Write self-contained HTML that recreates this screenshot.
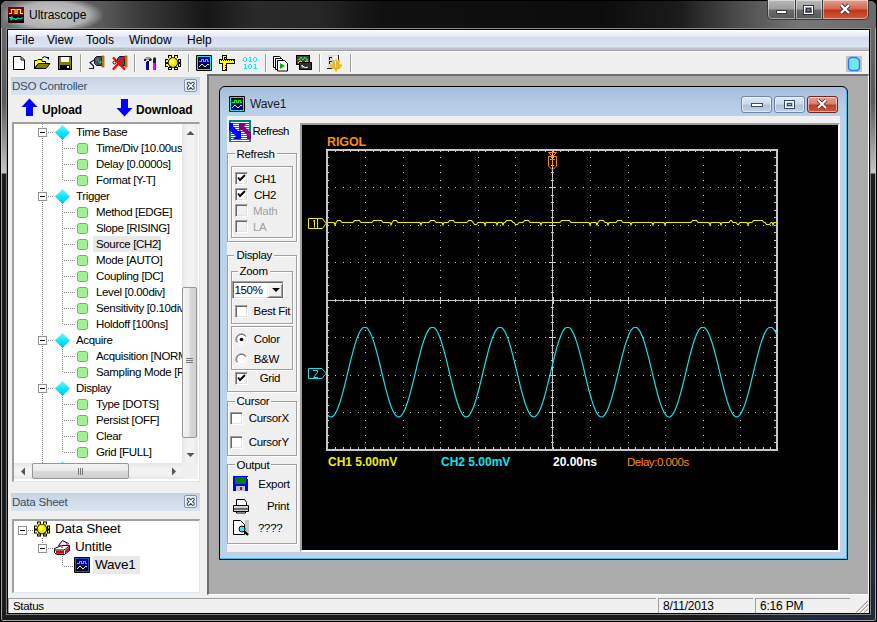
<!DOCTYPE html>
<html><head><meta charset="utf-8">
<style>
*{margin:0;padding:0;box-sizing:border-box}
html,body{width:877px;height:622px;overflow:hidden;background:#000;font-family:"Liberation Sans",sans-serif;font-size:11px;color:#000}
.a{position:absolute}
svg{position:absolute;overflow:visible}
/* frame */
#frame{left:0;top:0;width:877px;height:622px;border-radius:7px 7px 3px 3px;background:linear-gradient(#6c6c6c 0,#626262 60px,#585858 100px,#c6c6c6 172px,#1c1c1c 173px,#1c1c1c 100%);border:1px solid #000;overflow:hidden}
#frame .hl{position:absolute;left:0;top:0;right:0;bottom:0;border:1px solid rgba(200,200,200,.75);border-radius:6px 6px 2px 2px}
#title{left:1px;top:1px;width:875px;height:27px;border-radius:6px 6px 0 0;background:linear-gradient(90deg,#707070 0,#5a5a5a 100px,#3a3a3a 140px,#161616 205px,#2a2a2a 255px,#262626 320px,#101010 380px,#0c0c0c 600px,#1c1c1c 680px,#4e4e4e 740px,#767676 800px,#6a6a6a 877px)}
#glow{left:0;top:1px;width:120px;height:27px;background:radial-gradient(ellipse 52px 18px at 52px 14px,rgba(205,205,205,.95) 0,rgba(185,185,185,.9) 70%,rgba(120,120,120,0) 100%)}
#ttext{left:29px;top:8px;font-size:12px;color:#000}
/* client */
#client{left:7px;top:29px;width:863px;height:585px;background:#f0f0f0;border:1px solid #000;box-shadow:0 0 0 1px rgba(150,150,150,.8)}
#menubar{left:8px;top:30px;width:861px;height:19px;background:linear-gradient(#fff 0,#f4f6fb 2px,#e8ecf7 6px,#d6dcef 7px,#dde4f4 17px,#bcc0d0 18px)}
.mi{position:absolute;top:3px;font-size:12px;color:#000}
#toolbar{left:8px;top:49px;width:861px;height:545px;background:linear-gradient(#c2c2c2 0,#c2c2c2 1px,#a0a0a0 1px,#a0a0a0 2px,#fff 2px,#fff 3px,#f0f0f0 3px)}
/* panels */
.ptitle{position:absolute;height:18px;background:linear-gradient(#c6d3e2,#dbe5f0);color:#3c4e63;font-size:11.6px;letter-spacing:-0.25px;padding:2px 0 0 1px}
.pclose{position:absolute;width:13px;height:13px;border:1px solid #8494ac;border-radius:2px;background:#d6e2ef;box-shadow:inset 0 0 0 1px #e8f0f8}
.tree{position:absolute;background:#fff;border-top:2px solid #a0a0a0;border-left:2px solid #a0a0a0;border-right:1px solid #dce7f3;border-bottom:1px solid #dce7f3}
.ti{position:absolute;font-size:12px;white-space:nowrap;line-height:14px}
/* mdi */
#mdi{left:207px;top:74px;width:662px;height:521px;background:#ababab;border-top:2px solid #6e6e6e;border-left:2px solid #6e6e6e;border-right:1px solid #fff;border-bottom:1px solid #fff}
#wave{left:219px;top:86px;width:629px;height:474px;border:1px solid #000;border-radius:6px 6px 0 0;background:linear-gradient(#a5bedb 0,#b4cae4 15px,#bcd1ea 30px,#bcd1ea 100%);box-shadow:inset -1px -1px 0 #29c8f0}
#wclient{left:227px;top:116px;width:613px;height:436px;background:#f0f0f0}
#scope{left:300px;top:123px;width:540px;height:429px;background:#000;border-top:2px solid #a0a0a0;border-left:2px solid #a0a0a0;border-right:2px solid #fff;border-bottom:2px solid #fff}
.gb{position:absolute;border:1px solid #a0a0a0;box-shadow:inset 1px 1px 0 #fff,1px 1px 0 #fff}
.gl{position:absolute;background:#f0f0f0;font-size:12px;padding:0 2px;line-height:13px}
.lbl{position:absolute;font-size:12px;line-height:13px;white-space:nowrap}
.cb{position:absolute;width:13px;height:13px;border:1px solid #8e8f8f;background:linear-gradient(135deg,#dcdcdc,#fff)}
/* status */
#status{left:8px;top:598px;width:861px;height:16px}
.sp{position:absolute;top:0;height:15px;border-top:1px solid #a0a0a0;border-left:1px solid #a0a0a0;font-size:12px;padding:1px 0 0 4px;line-height:13px;letter-spacing:-0.2px}
</style></head>
<body>
<div id="frame" class="a"><div class="a" style="left:640px;top:560px;width:236px;height:62px;background:radial-gradient(ellipse 120px 30px at 180px 62px,rgba(40,90,150,.3),rgba(40,90,150,0))"></div><div class="a" style="left:820px;top:420px;width:56px;height:200px;background:radial-gradient(ellipse 20px 80px at 56px 150px,rgba(40,90,150,.3),rgba(40,90,150,0))"></div><div class="hl"></div></div>
<div id="title" class="a"></div>
<div id="glow" class="a"></div>
<div id="ttext" class="a">Ultrascope</div>

<div id="client" class="a"></div>
<div id="menubar" class="a">
  <span class="mi" style="left:7px">File</span>
  <span class="mi" style="left:39px">View</span>
  <span class="mi" style="left:78px">Tools</span>
  <span class="mi" style="left:121px">Window</span>
  <span class="mi" style="left:179px">Help</span>
</div>
<div id="toolbar" class="a"></div>
<div class="ptitle" style="left:11px;top:493px;width:189px">Data Sheet</div>
<div class="pclose" style="left:184px;top:495px"></div>
<div class="tree" style="left:12px;top:519px;width:188px;height:74px"></div>
<!--TB--><svg style="left:0;top:0" width="877" height="80"><path d="M13.5 56.5H21L24.5 60V69.5H13.5Z" fill="#fff" stroke="#000"/><path d="M21 57V60H24" fill="none" stroke="#000"/><path d="M34.5 60.5H37L38 59.5H42V61.5H45.5V63.5H38.5L34.5 68.5Z" fill="#ffff00" stroke="#000"/><path d="M34.5 68.5L38.5 63.5H50L46 68.5Z" fill="#808000" stroke="#000"/><path d="M42 58Q44 55.5 47 57.5" fill="none" stroke="#000"/><path d="M46 57h3v3z" fill="#000"/><rect x="58.5" y="56.5" width="13" height="13" fill="#808000" stroke="#000"/><rect x="61" y="57" width="8" height="5" fill="#fff"/><rect x="60" y="65" width="10" height="4" fill="#000"/><rect x="67" y="66" width="2" height="2" fill="#fff"/><rect x="80" y="54" width="1" height="18" fill="#a0a0a0"/><rect x="81" y="54" width="1" height="18" fill="#fff"/><path d="M94.5 58.5L96.5 56.5H101.5V65.5H96.5L94.5 63.5Z" fill="#4a5060" stroke="#101828"/><path d="M97 58L100 64M96 61L99 59" stroke="#7a8a60" stroke-width=".8"/><rect x="100" y="61" width="1.5" height="2" fill="#20e080"/><rect x="102" y="56" width="2" height="11" fill="#e09020" stroke="#604000" stroke-width=".6"/><path d="M95 59.5L90 62.5L93.5 66V68.5H89" fill="none" stroke="#101838" stroke-width="1.2"/><path d="M117.5 58.5L119.5 56.5H124.5V65.5H119.5L117.5 63.5Z" fill="#4a5060" stroke="#101828"/><rect x="125" y="56" width="2" height="11" fill="#e09020" stroke="#604000" stroke-width=".6"/><circle cx="114.5" cy="62.5" r="1.5" fill="#fff" stroke="#000"/><path d="M113 57.5L125 69.5M124.5 57L113 69.5" stroke="#ff0000" stroke-width="2.4"/><rect x="134" y="54" width="1" height="18" fill="#a0a0a0"/><rect x="135" y="54" width="1" height="18" fill="#fff"/><path d="M144 59.5L146 57.5H150L152 59.5L151 61H149V59.5H146V61H144Z" fill="#202020"/><rect x="145" y="58" width="5" height="1" fill="#b0b0b0"/><rect x="146" y="61" width="3" height="9" fill="#0000ff"/><rect x="148" y="61" width="1" height="9" fill="#000"/><rect x="146" y="61" width="1" height="1" fill="#40e0e0"/><path d="M154 57L156 58V63H153V59Z" fill="#202020"/><rect x="153" y="63" width="3" height="7" fill="#ff00ff"/><rect x="155" y="63" width="1" height="7" fill="#a00020"/><rect x="155" y="63" width="1" height="1" fill="#ff0000"/><g fill="#000"><path d="M168 55h4v3h-4zM174 55h4v3h-4zM165 59h3v4h-3zM178 59h3v4h-3zM165 63h3v4h-3zM178 63h3v4h-3zM168 67h4v3h-4zM174 67h4v3h-4z"/></g><g fill="#ffff00"><path d="M169 56h2v2h-2zM175 56h2v2h-2zM166 60h2v2h-2zM179 60h1v2h-1zM166 64h2v2h-2zM179 64h1v2h-1zM169 68h2v1h-2zM175 68h2v1h-2z"/></g><circle cx="173" cy="62.5" r="5.2" fill="#000"/><circle cx="173" cy="62.5" r="4.4" fill="#e8e800"/><circle cx="172" cy="61.5" r="2.6" fill="#ffff40"/><rect x="188" y="54" width="1" height="18" fill="#a0a0a0"/><rect x="189" y="54" width="1" height="18" fill="#fff"/><rect x="196" y="55" width="16" height="16" rx="1" fill="#000"/><rect x="197" y="56" width="14" height="14" fill="#00f0f0"/><rect x="198" y="57" width="12" height="12" fill="#000"/><rect x="199" y="58" width="10" height="10" fill="#000090"/><rect x="199" y="61" width="2" height="1" fill="#00ff00"/><rect x="201" y="59" width="1" height="3" fill="#00ff00"/><rect x="201" y="59" width="3" height="1" fill="#00ff00"/><rect x="203" y="59" width="1" height="3" fill="#00ff00"/><rect x="203" y="61" width="2" height="1" fill="#00ff00"/><rect x="205" y="59" width="1" height="3" fill="#00ff00"/><rect x="205" y="59" width="3" height="1" fill="#00ff00"/><rect x="207" y="59" width="1" height="3" fill="#00ff00"/><rect x="207" y="61" width="2" height="1" fill="#00ff00"/><rect x="199" y="66" width="1" height="1" fill="#ffff00"/><rect x="200" y="65" width="1" height="1" fill="#ffff00"/><rect x="201" y="64" width="2" height="1" fill="#ffff00"/><rect x="203" y="65" width="1" height="1" fill="#ffff00"/><rect x="204" y="66" width="2" height="1" fill="#ffff00"/><rect x="206" y="65" width="1" height="1" fill="#ffff00"/><rect x="207" y="64" width="2" height="1" fill="#ffff00"/><rect x="222" y="55" width="5" height="16" fill="#000"/><rect x="219" y="59" width="16" height="5" fill="#000"/><rect x="223" y="56" width="3" height="14" fill="#ffff00"/><rect x="220" y="60" width="14" height="3" fill="#ffff00"/><g fill="#000"><rect x="224" y="57" width="2" height="1"/><rect x="224" y="58" width="1" height="1"/><rect x="224" y="59" width="2" height="1"/><rect x="221" y="60" width="1" height="1"/><rect x="223" y="60" width="1" height="1"/><rect x="225" y="60" width="1" height="1"/><rect x="227" y="60" width="1" height="1"/><rect x="229" y="60" width="1" height="1"/><rect x="231" y="60" width="1" height="1"/><rect x="233" y="60" width="1" height="1"/><rect x="225" y="65" width="1" height="1"/><rect x="225" y="67" width="1" height="1"/><rect x="225" y="69" width="1" height="1"/></g><g fill="#00f0ff"><path d="M244 57h2v1h-2zM243 58h1v3h-1zM246 58h1v3h-1zM244 61h2v1h-2z"/><path d="M249 57h2v5h-1v-4h-1zM249 61h3v1h-3z"/><path d="M254 57h2v1h-2zM253 58h1v3h-1zM256 58h1v3h-1zM254 61h2v1h-2z"/><path d="M244 64h2v5h-1v-4h-1zM244 68h3v1h-3z"/><path d="M249 64h2v1h-2zM248 65h1v3h-1zM251 65h1v3h-1zM249 68h2v1h-2z"/><path d="M254 64h2v5h-1v-4h-1zM254 68h3v1h-3z"/></g><rect x="265" y="54" width="1" height="18" fill="#a0a0a0"/><rect x="266" y="54" width="1" height="18" fill="#fff"/><path d="M273.5 56.5h6l2 2v9h-8z" fill="#fff" stroke="#000"/><path d="M275.5 58.5h6l2 2v9h-8z" fill="#fff" stroke="#000"/><path d="M277.5 60.5h7l3 3v7.5h-10z" fill="#fff" stroke="#000"/><path d="M280 63v6l5-3z" fill="#00b000"/><rect x="296.5" y="55.5" width="13" height="9" fill="#404040" stroke="#000"/><path d="M298 59.5h2v-2h2v2h2v-2h2v2h2" fill="none" stroke="#00ff00"/><path d="M298 63l2-2h1l2 2h1l2-2h2" fill="none" stroke="#ffff00"/><rect x="299.5" y="62.5" width="12" height="7" fill="#303030" stroke="#000"/><path d="M302 65v2h2M302 65l2 2q2 1.5 4 0" fill="none" stroke="#fff"/><rect x="319" y="54" width="1" height="18" fill="#a0a0a0"/><rect x="320" y="54" width="1" height="18" fill="#fff"/><rect x="328" y="55" width="11" height="14" fill="#d8d8d8"/><rect x="333" y="56" width="5" height="10" fill="#f0f0f0"/><rect x="338" y="55" width="1" height="14" fill="#303030"/><g fill="#202020"><rect x="329" y="57" width="3" height="1"/><rect x="329" y="58" width="1" height="2"/><rect x="329" y="61" width="3" height="1"/><rect x="329" y="62" width="1" height="2"/><rect x="327" y="68" width="5" height="1"/></g><g fill="#f8b800"><circle cx="336" cy="65.5" r="4"/><path d="M335 59.5h2v12h-2zM330 64.5h12v2h-12zM331.5 61l1.5-1.5 8 8-1.5 1.5zM340.5 61l-1.5-1.5-8 8 1.5 1.5z"/></g><rect x="334" y="61" width="4" height="6" fill="#c8c050"/><rect x="335" y="61" width="1" height="6" fill="#f0f0a0"/><rect x="350" y="54" width="1" height="18" fill="#a0a0a0"/><rect x="351" y="54" width="1" height="18" fill="#fff"/><rect x="846" y="56" width="16" height="16" fill="#c4c4c4"/><path d="M849.5 58.5L850.5 57.5H856.5L859.5 60.5V68.5L857.5 70.5H850.5L848.5 68.5V59.5Z" fill="#72e6f0" stroke="#1a7cff" stroke-width="1.3"/></svg><!--/TB--><!-- data sheet tree -->
<svg style="left:0;top:0" width="210" height="600"><g fill="#808080">

<rect x="28" y="530" width="1" height="1"/><rect x="30" y="530" width="1" height="1"/><rect x="32" y="530" width="1" height="1"/>
<rect x="42" y="538" width="1" height="1"/><rect x="42" y="540" width="1" height="1"/><rect x="42" y="542" width="1" height="1"/>
<rect x="48" y="548" width="1" height="1"/><rect x="50" y="548" width="1" height="1"/><rect x="52" y="548" width="1" height="1"/>
<rect x="62" y="556" width="1" height="1"/><rect x="62" y="558" width="1" height="1"/><rect x="62" y="560" width="1" height="1"/><rect x="62" y="562" width="1" height="1"/><rect x="62" y="564" width="1" height="1"/>
<rect x="64" y="566" width="1" height="1"/><rect x="66" y="566" width="1" height="1"/><rect x="68" y="566" width="1" height="1"/><rect x="70" y="566" width="1" height="1"/><rect x="72" y="566" width="1" height="1"/>
</g>
<rect x="18.5" y="526.5" width="8" height="8" fill="#fff" stroke="#919191"/><rect x="20" y="530" width="5" height="1" fill="#000"/>
<rect x="38.5" y="544.5" width="8" height="8" fill="#fff" stroke="#919191"/><rect x="40" y="548" width="5" height="1" fill="#000"/>
<g transform="translate(-131,466.5)"><g fill="#000"><path d="M168 55h4v3h-4zM174 55h4v3h-4zM165 59h3v4h-3zM178 59h3v4h-3zM165 63h3v4h-3zM178 63h3v4h-3zM168 67h4v3h-4zM174 67h4v3h-4z"/></g><g fill="#ffff00"><path d="M169 56h2v2h-2zM175 56h2v2h-2zM166 60h2v2h-2zM179 60h1v2h-1zM166 64h2v2h-2zM179 64h1v2h-1zM169 68h2v1h-2zM175 68h2v1h-2z"/></g><circle cx="173" cy="62.5" r="5.2" fill="#000"/><circle cx="173" cy="62.5" r="4.4" fill="#e8e800"/><circle cx="172" cy="61.5" r="2.6" fill="#ffff40"/></g>
<path d="M58.5 545.5L62.5 540.5L68.5 543.5L64.5 548.5Z" fill="#e8e8e8" stroke="#000"/><path d="M54.5 548.5L61.5 545.5H69.5V550.5L64.5 554.5H56.5L54.5 552.5Z" fill="#fff" stroke="#000"/><path d="M55 550h9l5-3.5" fill="none" stroke="#000"/><path d="M56 551.5h8M56 553h8" stroke="#e00000" stroke-width="1.3"/><path d="M65 550.5l4-3v3l-4 3.5z" fill="#d00030"/><rect x="61" y="546" width="2" height="2" fill="#ff40c0"/><rect x="66" y="543" width="2" height="2" fill="#ff40c0"/>
<rect x="74" y="557" width="16" height="16" rx="1" fill="#000"/><rect x="75" y="558" width="14" height="14" fill="#1a5ac8"/><rect x="76" y="559" width="12" height="12" fill="#000"/><rect x="77" y="560" width="10" height="10" fill="#000090"/><rect x="77" y="563" width="2" height="1" fill="#00ff00"/><rect x="79" y="561" width="1" height="3" fill="#00ff00"/><rect x="79" y="561" width="3" height="1" fill="#00ff00"/><rect x="81" y="561" width="1" height="3" fill="#00ff00"/><rect x="81" y="563" width="2" height="1" fill="#00ff00"/><rect x="83" y="561" width="1" height="3" fill="#00ff00"/><rect x="83" y="561" width="3" height="1" fill="#00ff00"/><rect x="85" y="561" width="1" height="3" fill="#00ff00"/><rect x="85" y="563" width="2" height="1" fill="#00ff00"/><rect x="77" y="568" width="1" height="1" fill="#ffff00"/><rect x="78" y="567" width="1" height="1" fill="#ffff00"/><rect x="79" y="566" width="2" height="1" fill="#ffff00"/><rect x="81" y="567" width="1" height="1" fill="#ffff00"/><rect x="82" y="568" width="2" height="1" fill="#ffff00"/><rect x="84" y="567" width="1" height="1" fill="#ffff00"/><rect x="85" y="566" width="2" height="1" fill="#ffff00"/>
</svg>
<div class="a" style="left:93px;top:556px;width:47px;height:18px;background:#e9e9e9"></div>
<div class="a" style="left:55px;top:521px;font-size:13.5px;line-height:16px;letter-spacing:-0.2px">Data Sheet</div>
<div class="a" style="left:75px;top:539px;font-size:13.5px;line-height:16px;letter-spacing:-0.2px">Untitle</div>
<div class="a" style="left:95px;top:557px;font-size:13.5px;line-height:16px;letter-spacing:-0.2px">Wave1</div>


<!-- DSO controller panel -->
<div class="ptitle" style="left:11px;top:77px;width:189px">DSO Controller</div>
<div class="pclose" style="left:184px;top:79px"></div>

<div class="tree" style="left:12px;top:122px;width:188px;height:360px"></div>
<!--TREE--><div class="a" style="left:14px;top:124px;width:168px;height:339px;overflow:hidden"><svg style="left:0;top:0" width="168" height="339"><g fill="#808080"><rect x="28" y="0" width="1" height="1"/><rect x="28" y="2" width="1" height="1"/><rect x="28" y="4" width="1" height="1"/><rect x="28" y="6" width="1" height="1"/><rect x="28" y="8" width="1" height="1"/><rect x="28" y="10" width="1" height="1"/><rect x="28" y="12" width="1" height="1"/><rect x="28" y="14" width="1" height="1"/><rect x="28" y="16" width="1" height="1"/><rect x="28" y="18" width="1" height="1"/><rect x="28" y="20" width="1" height="1"/><rect x="28" y="22" width="1" height="1"/><rect x="28" y="24" width="1" height="1"/><rect x="28" y="26" width="1" height="1"/><rect x="28" y="28" width="1" height="1"/><rect x="28" y="30" width="1" height="1"/><rect x="28" y="32" width="1" height="1"/><rect x="28" y="34" width="1" height="1"/><rect x="28" y="36" width="1" height="1"/><rect x="28" y="38" width="1" height="1"/><rect x="28" y="40" width="1" height="1"/><rect x="28" y="42" width="1" height="1"/><rect x="28" y="44" width="1" height="1"/><rect x="28" y="46" width="1" height="1"/><rect x="28" y="48" width="1" height="1"/><rect x="28" y="50" width="1" height="1"/><rect x="28" y="52" width="1" height="1"/><rect x="28" y="54" width="1" height="1"/><rect x="28" y="56" width="1" height="1"/><rect x="28" y="58" width="1" height="1"/><rect x="28" y="60" width="1" height="1"/><rect x="28" y="62" width="1" height="1"/><rect x="28" y="64" width="1" height="1"/><rect x="28" y="66" width="1" height="1"/><rect x="28" y="68" width="1" height="1"/><rect x="28" y="70" width="1" height="1"/><rect x="28" y="72" width="1" height="1"/><rect x="28" y="74" width="1" height="1"/><rect x="28" y="76" width="1" height="1"/><rect x="28" y="78" width="1" height="1"/><rect x="28" y="80" width="1" height="1"/><rect x="28" y="82" width="1" height="1"/><rect x="28" y="84" width="1" height="1"/><rect x="28" y="86" width="1" height="1"/><rect x="28" y="88" width="1" height="1"/><rect x="28" y="90" width="1" height="1"/><rect x="28" y="92" width="1" height="1"/><rect x="28" y="94" width="1" height="1"/><rect x="28" y="96" width="1" height="1"/><rect x="28" y="98" width="1" height="1"/><rect x="28" y="100" width="1" height="1"/><rect x="28" y="102" width="1" height="1"/><rect x="28" y="104" width="1" height="1"/><rect x="28" y="106" width="1" height="1"/><rect x="28" y="108" width="1" height="1"/><rect x="28" y="110" width="1" height="1"/><rect x="28" y="112" width="1" height="1"/><rect x="28" y="114" width="1" height="1"/><rect x="28" y="116" width="1" height="1"/><rect x="28" y="118" width="1" height="1"/><rect x="28" y="120" width="1" height="1"/><rect x="28" y="122" width="1" height="1"/><rect x="28" y="124" width="1" height="1"/><rect x="28" y="126" width="1" height="1"/><rect x="28" y="128" width="1" height="1"/><rect x="28" y="130" width="1" height="1"/><rect x="28" y="132" width="1" height="1"/><rect x="28" y="134" width="1" height="1"/><rect x="28" y="136" width="1" height="1"/><rect x="28" y="138" width="1" height="1"/><rect x="28" y="140" width="1" height="1"/><rect x="28" y="142" width="1" height="1"/><rect x="28" y="144" width="1" height="1"/><rect x="28" y="146" width="1" height="1"/><rect x="28" y="148" width="1" height="1"/><rect x="28" y="150" width="1" height="1"/><rect x="28" y="152" width="1" height="1"/><rect x="28" y="154" width="1" height="1"/><rect x="28" y="156" width="1" height="1"/><rect x="28" y="158" width="1" height="1"/><rect x="28" y="160" width="1" height="1"/><rect x="28" y="162" width="1" height="1"/><rect x="28" y="164" width="1" height="1"/><rect x="28" y="166" width="1" height="1"/><rect x="28" y="168" width="1" height="1"/><rect x="28" y="170" width="1" height="1"/><rect x="28" y="172" width="1" height="1"/><rect x="28" y="174" width="1" height="1"/><rect x="28" y="176" width="1" height="1"/><rect x="28" y="178" width="1" height="1"/><rect x="28" y="180" width="1" height="1"/><rect x="28" y="182" width="1" height="1"/><rect x="28" y="184" width="1" height="1"/><rect x="28" y="186" width="1" height="1"/><rect x="28" y="188" width="1" height="1"/><rect x="28" y="190" width="1" height="1"/><rect x="28" y="192" width="1" height="1"/><rect x="28" y="194" width="1" height="1"/><rect x="28" y="196" width="1" height="1"/><rect x="28" y="198" width="1" height="1"/><rect x="28" y="200" width="1" height="1"/><rect x="28" y="202" width="1" height="1"/><rect x="28" y="204" width="1" height="1"/><rect x="28" y="206" width="1" height="1"/><rect x="28" y="208" width="1" height="1"/><rect x="28" y="210" width="1" height="1"/><rect x="28" y="212" width="1" height="1"/><rect x="28" y="214" width="1" height="1"/><rect x="28" y="216" width="1" height="1"/><rect x="28" y="218" width="1" height="1"/><rect x="28" y="220" width="1" height="1"/><rect x="28" y="222" width="1" height="1"/><rect x="28" y="224" width="1" height="1"/><rect x="28" y="226" width="1" height="1"/><rect x="28" y="228" width="1" height="1"/><rect x="28" y="230" width="1" height="1"/><rect x="28" y="232" width="1" height="1"/><rect x="28" y="234" width="1" height="1"/><rect x="28" y="236" width="1" height="1"/><rect x="28" y="238" width="1" height="1"/><rect x="28" y="240" width="1" height="1"/><rect x="28" y="242" width="1" height="1"/><rect x="28" y="244" width="1" height="1"/><rect x="28" y="246" width="1" height="1"/><rect x="28" y="248" width="1" height="1"/><rect x="28" y="250" width="1" height="1"/><rect x="28" y="252" width="1" height="1"/><rect x="28" y="254" width="1" height="1"/><rect x="28" y="256" width="1" height="1"/><rect x="28" y="258" width="1" height="1"/><rect x="28" y="260" width="1" height="1"/><rect x="28" y="262" width="1" height="1"/><rect x="28" y="264" width="1" height="1"/><rect x="28" y="266" width="1" height="1"/><rect x="28" y="268" width="1" height="1"/><rect x="28" y="270" width="1" height="1"/><rect x="28" y="272" width="1" height="1"/><rect x="28" y="274" width="1" height="1"/><rect x="28" y="276" width="1" height="1"/><rect x="28" y="278" width="1" height="1"/><rect x="28" y="280" width="1" height="1"/><rect x="28" y="282" width="1" height="1"/><rect x="28" y="284" width="1" height="1"/><rect x="28" y="286" width="1" height="1"/><rect x="28" y="288" width="1" height="1"/><rect x="28" y="290" width="1" height="1"/><rect x="28" y="292" width="1" height="1"/><rect x="28" y="294" width="1" height="1"/><rect x="28" y="296" width="1" height="1"/><rect x="28" y="298" width="1" height="1"/><rect x="28" y="300" width="1" height="1"/><rect x="28" y="302" width="1" height="1"/><rect x="28" y="304" width="1" height="1"/><rect x="28" y="306" width="1" height="1"/><rect x="28" y="308" width="1" height="1"/><rect x="28" y="310" width="1" height="1"/><rect x="28" y="312" width="1" height="1"/><rect x="28" y="314" width="1" height="1"/><rect x="28" y="316" width="1" height="1"/><rect x="28" y="318" width="1" height="1"/><rect x="28" y="320" width="1" height="1"/><rect x="28" y="322" width="1" height="1"/><rect x="28" y="324" width="1" height="1"/><rect x="28" y="326" width="1" height="1"/><rect x="28" y="328" width="1" height="1"/><rect x="28" y="330" width="1" height="1"/><rect x="28" y="332" width="1" height="1"/><rect x="28" y="334" width="1" height="1"/><rect x="28" y="336" width="1" height="1"/><rect x="28" y="338" width="1" height="1"/><rect x="34" y="8" width="1" height="1"/><rect x="36" y="8" width="1" height="1"/><rect x="38" y="8" width="1" height="1"/><rect x="50" y="24" width="1" height="1"/><rect x="52" y="24" width="1" height="1"/><rect x="54" y="24" width="1" height="1"/><rect x="56" y="24" width="1" height="1"/><rect x="58" y="24" width="1" height="1"/><rect x="60" y="24" width="1" height="1"/><rect x="50" y="40" width="1" height="1"/><rect x="52" y="40" width="1" height="1"/><rect x="54" y="40" width="1" height="1"/><rect x="56" y="40" width="1" height="1"/><rect x="58" y="40" width="1" height="1"/><rect x="60" y="40" width="1" height="1"/><rect x="50" y="56" width="1" height="1"/><rect x="52" y="56" width="1" height="1"/><rect x="54" y="56" width="1" height="1"/><rect x="56" y="56" width="1" height="1"/><rect x="58" y="56" width="1" height="1"/><rect x="60" y="56" width="1" height="1"/><rect x="34" y="72" width="1" height="1"/><rect x="36" y="72" width="1" height="1"/><rect x="38" y="72" width="1" height="1"/><rect x="50" y="88" width="1" height="1"/><rect x="52" y="88" width="1" height="1"/><rect x="54" y="88" width="1" height="1"/><rect x="56" y="88" width="1" height="1"/><rect x="58" y="88" width="1" height="1"/><rect x="60" y="88" width="1" height="1"/><rect x="50" y="104" width="1" height="1"/><rect x="52" y="104" width="1" height="1"/><rect x="54" y="104" width="1" height="1"/><rect x="56" y="104" width="1" height="1"/><rect x="58" y="104" width="1" height="1"/><rect x="60" y="104" width="1" height="1"/><rect x="50" y="120" width="1" height="1"/><rect x="52" y="120" width="1" height="1"/><rect x="54" y="120" width="1" height="1"/><rect x="56" y="120" width="1" height="1"/><rect x="58" y="120" width="1" height="1"/><rect x="60" y="120" width="1" height="1"/><rect x="50" y="136" width="1" height="1"/><rect x="52" y="136" width="1" height="1"/><rect x="54" y="136" width="1" height="1"/><rect x="56" y="136" width="1" height="1"/><rect x="58" y="136" width="1" height="1"/><rect x="60" y="136" width="1" height="1"/><rect x="50" y="152" width="1" height="1"/><rect x="52" y="152" width="1" height="1"/><rect x="54" y="152" width="1" height="1"/><rect x="56" y="152" width="1" height="1"/><rect x="58" y="152" width="1" height="1"/><rect x="60" y="152" width="1" height="1"/><rect x="50" y="168" width="1" height="1"/><rect x="52" y="168" width="1" height="1"/><rect x="54" y="168" width="1" height="1"/><rect x="56" y="168" width="1" height="1"/><rect x="58" y="168" width="1" height="1"/><rect x="60" y="168" width="1" height="1"/><rect x="50" y="184" width="1" height="1"/><rect x="52" y="184" width="1" height="1"/><rect x="54" y="184" width="1" height="1"/><rect x="56" y="184" width="1" height="1"/><rect x="58" y="184" width="1" height="1"/><rect x="60" y="184" width="1" height="1"/><rect x="50" y="200" width="1" height="1"/><rect x="52" y="200" width="1" height="1"/><rect x="54" y="200" width="1" height="1"/><rect x="56" y="200" width="1" height="1"/><rect x="58" y="200" width="1" height="1"/><rect x="60" y="200" width="1" height="1"/><rect x="34" y="216" width="1" height="1"/><rect x="36" y="216" width="1" height="1"/><rect x="38" y="216" width="1" height="1"/><rect x="50" y="232" width="1" height="1"/><rect x="52" y="232" width="1" height="1"/><rect x="54" y="232" width="1" height="1"/><rect x="56" y="232" width="1" height="1"/><rect x="58" y="232" width="1" height="1"/><rect x="60" y="232" width="1" height="1"/><rect x="50" y="248" width="1" height="1"/><rect x="52" y="248" width="1" height="1"/><rect x="54" y="248" width="1" height="1"/><rect x="56" y="248" width="1" height="1"/><rect x="58" y="248" width="1" height="1"/><rect x="60" y="248" width="1" height="1"/><rect x="34" y="264" width="1" height="1"/><rect x="36" y="264" width="1" height="1"/><rect x="38" y="264" width="1" height="1"/><rect x="50" y="280" width="1" height="1"/><rect x="52" y="280" width="1" height="1"/><rect x="54" y="280" width="1" height="1"/><rect x="56" y="280" width="1" height="1"/><rect x="58" y="280" width="1" height="1"/><rect x="60" y="280" width="1" height="1"/><rect x="50" y="296" width="1" height="1"/><rect x="52" y="296" width="1" height="1"/><rect x="54" y="296" width="1" height="1"/><rect x="56" y="296" width="1" height="1"/><rect x="58" y="296" width="1" height="1"/><rect x="60" y="296" width="1" height="1"/><rect x="50" y="312" width="1" height="1"/><rect x="52" y="312" width="1" height="1"/><rect x="54" y="312" width="1" height="1"/><rect x="56" y="312" width="1" height="1"/><rect x="58" y="312" width="1" height="1"/><rect x="60" y="312" width="1" height="1"/><rect x="50" y="328" width="1" height="1"/><rect x="52" y="328" width="1" height="1"/><rect x="54" y="328" width="1" height="1"/><rect x="56" y="328" width="1" height="1"/><rect x="58" y="328" width="1" height="1"/><rect x="60" y="328" width="1" height="1"/><rect x="34" y="344" width="1" height="1"/><rect x="36" y="344" width="1" height="1"/><rect x="38" y="344" width="1" height="1"/><rect x="48" y="17" width="1" height="1"/><rect x="48" y="19" width="1" height="1"/><rect x="48" y="21" width="1" height="1"/><rect x="48" y="23" width="1" height="1"/><rect x="48" y="25" width="1" height="1"/><rect x="48" y="27" width="1" height="1"/><rect x="48" y="29" width="1" height="1"/><rect x="48" y="31" width="1" height="1"/><rect x="48" y="33" width="1" height="1"/><rect x="48" y="35" width="1" height="1"/><rect x="48" y="37" width="1" height="1"/><rect x="48" y="39" width="1" height="1"/><rect x="48" y="41" width="1" height="1"/><rect x="48" y="43" width="1" height="1"/><rect x="48" y="45" width="1" height="1"/><rect x="48" y="47" width="1" height="1"/><rect x="48" y="49" width="1" height="1"/><rect x="48" y="51" width="1" height="1"/><rect x="48" y="53" width="1" height="1"/><rect x="48" y="55" width="1" height="1"/><rect x="48" y="81" width="1" height="1"/><rect x="48" y="83" width="1" height="1"/><rect x="48" y="85" width="1" height="1"/><rect x="48" y="87" width="1" height="1"/><rect x="48" y="89" width="1" height="1"/><rect x="48" y="91" width="1" height="1"/><rect x="48" y="93" width="1" height="1"/><rect x="48" y="95" width="1" height="1"/><rect x="48" y="97" width="1" height="1"/><rect x="48" y="99" width="1" height="1"/><rect x="48" y="101" width="1" height="1"/><rect x="48" y="103" width="1" height="1"/><rect x="48" y="105" width="1" height="1"/><rect x="48" y="107" width="1" height="1"/><rect x="48" y="109" width="1" height="1"/><rect x="48" y="111" width="1" height="1"/><rect x="48" y="113" width="1" height="1"/><rect x="48" y="115" width="1" height="1"/><rect x="48" y="117" width="1" height="1"/><rect x="48" y="119" width="1" height="1"/><rect x="48" y="121" width="1" height="1"/><rect x="48" y="123" width="1" height="1"/><rect x="48" y="125" width="1" height="1"/><rect x="48" y="127" width="1" height="1"/><rect x="48" y="129" width="1" height="1"/><rect x="48" y="131" width="1" height="1"/><rect x="48" y="133" width="1" height="1"/><rect x="48" y="135" width="1" height="1"/><rect x="48" y="137" width="1" height="1"/><rect x="48" y="139" width="1" height="1"/><rect x="48" y="141" width="1" height="1"/><rect x="48" y="143" width="1" height="1"/><rect x="48" y="145" width="1" height="1"/><rect x="48" y="147" width="1" height="1"/><rect x="48" y="149" width="1" height="1"/><rect x="48" y="151" width="1" height="1"/><rect x="48" y="153" width="1" height="1"/><rect x="48" y="155" width="1" height="1"/><rect x="48" y="157" width="1" height="1"/><rect x="48" y="159" width="1" height="1"/><rect x="48" y="161" width="1" height="1"/><rect x="48" y="163" width="1" height="1"/><rect x="48" y="165" width="1" height="1"/><rect x="48" y="167" width="1" height="1"/><rect x="48" y="169" width="1" height="1"/><rect x="48" y="171" width="1" height="1"/><rect x="48" y="173" width="1" height="1"/><rect x="48" y="175" width="1" height="1"/><rect x="48" y="177" width="1" height="1"/><rect x="48" y="179" width="1" height="1"/><rect x="48" y="181" width="1" height="1"/><rect x="48" y="183" width="1" height="1"/><rect x="48" y="185" width="1" height="1"/><rect x="48" y="187" width="1" height="1"/><rect x="48" y="189" width="1" height="1"/><rect x="48" y="191" width="1" height="1"/><rect x="48" y="193" width="1" height="1"/><rect x="48" y="195" width="1" height="1"/><rect x="48" y="197" width="1" height="1"/><rect x="48" y="199" width="1" height="1"/><rect x="48" y="225" width="1" height="1"/><rect x="48" y="227" width="1" height="1"/><rect x="48" y="229" width="1" height="1"/><rect x="48" y="231" width="1" height="1"/><rect x="48" y="233" width="1" height="1"/><rect x="48" y="235" width="1" height="1"/><rect x="48" y="237" width="1" height="1"/><rect x="48" y="239" width="1" height="1"/><rect x="48" y="241" width="1" height="1"/><rect x="48" y="243" width="1" height="1"/><rect x="48" y="245" width="1" height="1"/><rect x="48" y="247" width="1" height="1"/><rect x="48" y="273" width="1" height="1"/><rect x="48" y="275" width="1" height="1"/><rect x="48" y="277" width="1" height="1"/><rect x="48" y="279" width="1" height="1"/><rect x="48" y="281" width="1" height="1"/><rect x="48" y="283" width="1" height="1"/><rect x="48" y="285" width="1" height="1"/><rect x="48" y="287" width="1" height="1"/><rect x="48" y="289" width="1" height="1"/><rect x="48" y="291" width="1" height="1"/><rect x="48" y="293" width="1" height="1"/><rect x="48" y="295" width="1" height="1"/><rect x="48" y="297" width="1" height="1"/><rect x="48" y="299" width="1" height="1"/><rect x="48" y="301" width="1" height="1"/><rect x="48" y="303" width="1" height="1"/><rect x="48" y="305" width="1" height="1"/><rect x="48" y="307" width="1" height="1"/><rect x="48" y="309" width="1" height="1"/><rect x="48" y="311" width="1" height="1"/><rect x="48" y="313" width="1" height="1"/><rect x="48" y="315" width="1" height="1"/><rect x="48" y="317" width="1" height="1"/><rect x="48" y="319" width="1" height="1"/><rect x="48" y="321" width="1" height="1"/><rect x="48" y="323" width="1" height="1"/><rect x="48" y="325" width="1" height="1"/><rect x="48" y="327" width="1" height="1"/></g><rect x="24.5" y="4.5" width="8" height="8" fill="#fff" stroke="#919191"/><rect x="26" y="8" width="5" height="1" fill="#000"/><path d="M48.5 1.0L56.0 8.5L48.5 16.0L41.0 8.5Z" fill="url(#dg)"/><rect x="63.5" y="19.5" width="10" height="10" rx="2" fill="#a6f29a" stroke="#55c14b"/><rect x="65" y="21" width="7" height="7" fill="#9ef090"/><rect x="63.5" y="35.5" width="10" height="10" rx="2" fill="#a6f29a" stroke="#55c14b"/><rect x="65" y="37" width="7" height="7" fill="#9ef090"/><rect x="63.5" y="51.5" width="10" height="10" rx="2" fill="#a6f29a" stroke="#55c14b"/><rect x="65" y="53" width="7" height="7" fill="#9ef090"/><rect x="24.5" y="68.5" width="8" height="8" fill="#fff" stroke="#919191"/><rect x="26" y="72" width="5" height="1" fill="#000"/><path d="M48.5 65.0L56.0 72.5L48.5 80.0L41.0 72.5Z" fill="url(#dg)"/><rect x="63.5" y="83.5" width="10" height="10" rx="2" fill="#a6f29a" stroke="#55c14b"/><rect x="65" y="85" width="7" height="7" fill="#9ef090"/><rect x="63.5" y="99.5" width="10" height="10" rx="2" fill="#a6f29a" stroke="#55c14b"/><rect x="65" y="101" width="7" height="7" fill="#9ef090"/><rect x="63.5" y="115.5" width="10" height="10" rx="2" fill="#a6f29a" stroke="#55c14b"/><rect x="65" y="117" width="7" height="7" fill="#9ef090"/><rect x="63.5" y="131.5" width="10" height="10" rx="2" fill="#a6f29a" stroke="#55c14b"/><rect x="65" y="133" width="7" height="7" fill="#9ef090"/><rect x="63.5" y="147.5" width="10" height="10" rx="2" fill="#a6f29a" stroke="#55c14b"/><rect x="65" y="149" width="7" height="7" fill="#9ef090"/><rect x="63.5" y="163.5" width="10" height="10" rx="2" fill="#a6f29a" stroke="#55c14b"/><rect x="65" y="165" width="7" height="7" fill="#9ef090"/><rect x="63.5" y="179.5" width="10" height="10" rx="2" fill="#a6f29a" stroke="#55c14b"/><rect x="65" y="181" width="7" height="7" fill="#9ef090"/><rect x="63.5" y="195.5" width="10" height="10" rx="2" fill="#a6f29a" stroke="#55c14b"/><rect x="65" y="197" width="7" height="7" fill="#9ef090"/><rect x="24.5" y="212.5" width="8" height="8" fill="#fff" stroke="#919191"/><rect x="26" y="216" width="5" height="1" fill="#000"/><path d="M48.5 209.0L56.0 216.5L48.5 224.0L41.0 216.5Z" fill="url(#dg)"/><rect x="63.5" y="227.5" width="10" height="10" rx="2" fill="#a6f29a" stroke="#55c14b"/><rect x="65" y="229" width="7" height="7" fill="#9ef090"/><rect x="63.5" y="243.5" width="10" height="10" rx="2" fill="#a6f29a" stroke="#55c14b"/><rect x="65" y="245" width="7" height="7" fill="#9ef090"/><rect x="24.5" y="260.5" width="8" height="8" fill="#fff" stroke="#919191"/><rect x="26" y="264" width="5" height="1" fill="#000"/><path d="M48.5 257.0L56.0 264.5L48.5 272.0L41.0 264.5Z" fill="url(#dg)"/><rect x="63.5" y="275.5" width="10" height="10" rx="2" fill="#a6f29a" stroke="#55c14b"/><rect x="65" y="277" width="7" height="7" fill="#9ef090"/><rect x="63.5" y="291.5" width="10" height="10" rx="2" fill="#a6f29a" stroke="#55c14b"/><rect x="65" y="293" width="7" height="7" fill="#9ef090"/><rect x="63.5" y="307.5" width="10" height="10" rx="2" fill="#a6f29a" stroke="#55c14b"/><rect x="65" y="309" width="7" height="7" fill="#9ef090"/><rect x="63.5" y="323.5" width="10" height="10" rx="2" fill="#a6f29a" stroke="#55c14b"/><rect x="65" y="325" width="7" height="7" fill="#9ef090"/><rect x="24.5" y="340.5" width="8" height="8" fill="#fff" stroke="#919191"/><rect x="26" y="344" width="5" height="1" fill="#000"/><path d="M48.5 337.0L56.0 344.5L48.5 352.0L41.0 344.5Z" fill="url(#dg)"/><defs><linearGradient id="dg" x1="0" y1="0" x2="0" y2="1"><stop offset="0" stop-color="#6ff8ff"/><stop offset=".5" stop-color="#12e6fa"/><stop offset="1" stop-color="#00c4e0"/></linearGradient></defs></svg><div class="a" style="left:79px;top:112px;width:68px;height:16px;background:#e9e9e9"></div><div class="a" style="left:62px;top:0px;font-size:11.5px;letter-spacing:-0.35px;line-height:16px;white-space:nowrap">Time Base</div><div class="a" style="left:82px;top:16px;font-size:11.5px;letter-spacing:-0.35px;line-height:16px;white-space:nowrap">Time/Div [10.00us</div><div class="a" style="left:82px;top:32px;font-size:11.5px;letter-spacing:-0.35px;line-height:16px;white-space:nowrap">Delay [0.0000s]</div><div class="a" style="left:82px;top:48px;font-size:11.5px;letter-spacing:-0.35px;line-height:16px;white-space:nowrap">Format [Y-T]</div><div class="a" style="left:62px;top:64px;font-size:11.5px;letter-spacing:-0.35px;line-height:16px;white-space:nowrap">Trigger</div><div class="a" style="left:82px;top:80px;font-size:11.5px;letter-spacing:-0.35px;line-height:16px;white-space:nowrap">Method [EDGE]</div><div class="a" style="left:82px;top:96px;font-size:11.5px;letter-spacing:-0.35px;line-height:16px;white-space:nowrap">Slope [RISING]</div><div class="a" style="left:82px;top:112px;font-size:11.5px;letter-spacing:-0.35px;line-height:16px;white-space:nowrap">Source [CH2]</div><div class="a" style="left:82px;top:128px;font-size:11.5px;letter-spacing:-0.35px;line-height:16px;white-space:nowrap">Mode [AUTO]</div><div class="a" style="left:82px;top:144px;font-size:11.5px;letter-spacing:-0.35px;line-height:16px;white-space:nowrap">Coupling [DC]</div><div class="a" style="left:82px;top:160px;font-size:11.5px;letter-spacing:-0.35px;line-height:16px;white-space:nowrap">Level [0.00div]</div><div class="a" style="left:82px;top:176px;font-size:11.5px;letter-spacing:-0.35px;line-height:16px;white-space:nowrap">Sensitivity [0.10div</div><div class="a" style="left:82px;top:192px;font-size:11.5px;letter-spacing:-0.35px;line-height:16px;white-space:nowrap">Holdoff [100ns]</div><div class="a" style="left:62px;top:208px;font-size:11.5px;letter-spacing:-0.35px;line-height:16px;white-space:nowrap">Acquire</div><div class="a" style="left:82px;top:224px;font-size:11.5px;letter-spacing:-0.35px;line-height:16px;white-space:nowrap">Acquisition [NORMAL]</div><div class="a" style="left:82px;top:240px;font-size:11.5px;letter-spacing:-0.35px;line-height:16px;white-space:nowrap">Sampling Mode [REAL]</div><div class="a" style="left:62px;top:256px;font-size:11.5px;letter-spacing:-0.35px;line-height:16px;white-space:nowrap">Display</div><div class="a" style="left:82px;top:272px;font-size:11.5px;letter-spacing:-0.35px;line-height:16px;white-space:nowrap">Type [DOTS]</div><div class="a" style="left:82px;top:288px;font-size:11.5px;letter-spacing:-0.35px;line-height:16px;white-space:nowrap">Persist [OFF]</div><div class="a" style="left:82px;top:304px;font-size:11.5px;letter-spacing:-0.35px;line-height:16px;white-space:nowrap">Clear</div><div class="a" style="left:82px;top:320px;font-size:11.5px;letter-spacing:-0.35px;line-height:16px;white-space:nowrap">Grid [FULL]</div><div class="a" style="left:62px;top:336px;font-size:11.5px;letter-spacing:-0.35px;line-height:16px;white-space:nowrap">Utility</div></div><!--/TREE-->
<!-- upload/download -->
<svg style="left:0;top:0" width="200" height="120"><path d="M29.5 98.5L37.5 107H33V116H26V107H21.5Z" fill="#0000ff"/><path d="M124.5 116.5L132.5 108H128V99H121V108H116.5Z" fill="#0000ff"/></svg>
<div class="a" style="left:42px;top:103px;font-size:12px;font-weight:bold;letter-spacing:-0.1px">Upload</div>
<div class="a" style="left:136px;top:103px;font-size:12px;font-weight:bold;letter-spacing:-0.1px">Download</div>
<!-- panel close x -->
<svg style="left:0;top:0" width="210" height="520"><g stroke="#303a48" stroke-width="3.4" stroke-linecap="round"><path d="M188.5 83.5L193 88M193 83.5L188.5 88"/><path d="M188.5 499.5L193 504M193 499.5L188.5 504"/></g><g stroke="#fff" stroke-width="1.7" stroke-linecap="round"><path d="M188.5 83.5L193 88M193 83.5L188.5 88"/><path d="M188.5 499.5L193 504M193 499.5L188.5 504"/></g></svg>
<!-- v scrollbar -->
<div class="a" style="left:182px;top:124px;width:16px;height:339px;background:linear-gradient(90deg,#e6e6e6,#f2f2f2 30%,#f2f2f2 70%,#e8e8e8)"></div>
<div class="a" style="left:182px;top:287px;width:15px;height:151px;border:1px solid #979797;border-radius:2px;background:linear-gradient(90deg,#f3f3f3 0,#ececec 45%,#d8d8d8 55%,#cfcfcf 100%)"></div>
<svg style="left:0;top:0" width="210" height="490"><g fill="#555"><path d="M186.5 135h8l-4-4z"/><path d="M186.5 453h8l-4 4z"/><path d="M25 471v-8l-4 4z" transform="translate(0,0)"/><path d="M172 467v-8l4 4z" transform="translate(0,4)"/></g><g fill="#777"><rect x="186" y="358" width="7" height="1"/><rect x="186" y="360" width="7" height="1"/><rect x="186" y="362" width="7" height="1"/></g></svg>
<!-- h scrollbar -->
<div class="a" style="left:14px;top:463px;width:168px;height:16px;background:linear-gradient(#e6e6e6,#f2f2f2 30%,#f2f2f2 70%,#e8e8e8)"></div>
<div class="a" style="left:32px;top:463px;width:97px;height:16px;border:1px solid #979797;border-radius:2px;background:linear-gradient(#f3f3f3 0,#ececec 45%,#d8d8d8 55%,#cfcfcf 100%)"></div>
<svg style="left:0;top:0" width="210" height="490"><g fill="#555"><path d="M25 467.5l-4 4 4 4z"/><path d="M172 467.5l4 4-4 4z"/></g><g fill="#777"><rect x="78" y="468" width="1" height="7"/><rect x="80" y="468" width="1" height="7"/><rect x="82" y="468" width="1" height="7"/></g></svg>
<div class="a" style="left:182px;top:463px;width:16px;height:16px;background:#f0f0f0"></div>




<!-- MDI -->
<div id="mdi" class="a"></div>
<div id="wave" class="a"></div>
<div id="wclient" class="a"></div>
<div id="scope" class="a"></div>
<!--WAVE--><svg style="left:0;top:0" width="877" height="622"><rect x="229" y="120" width="22" height="22" fill="#008080"/><rect x="231" y="122" width="18" height="1" fill="#fff"/><rect x="231" y="124" width="18" height="1" fill="#fff"/><rect x="231" y="126" width="18" height="1" fill="#fff"/><rect x="231" y="128" width="18" height="1" fill="#fff"/><rect x="231" y="130" width="18" height="1" fill="#fff"/><rect x="231" y="132" width="18" height="1" fill="#fff"/><rect x="231" y="134" width="18" height="1" fill="#fff"/><rect x="231" y="136" width="18" height="1" fill="#fff"/><rect x="231" y="138" width="18" height="1" fill="#fff"/><rect x="231" y="140" width="18" height="1" fill="#fff"/><path d="M229 123H233V126L238 131H241V139H233L236 136L229 130Z" fill="#0000ff"/><path d="M239 123H247L244 126L251 133V139H247V135L242 130L239 131Z" fill="#800080"/></svg><div class="a" style="left:252.5px;top:124px;font-size:11.5px;letter-spacing:-0.3px;line-height:14px;white-space:nowrap;letter-spacing:-0.55px">Refresh</div><div class="a" style="left:228px;top:154px;width:70px;height:89px;border:1px solid #fff"></div><div class="a" style="left:227px;top:153px;width:70px;height:89px;border:1px solid #a0a0a0"></div><div class="a" style="left:234.5px;top:147px;font-size:11.5px;letter-spacing:-0.3px;line-height:14px;background:#f0f0f0;padding:0 2px">Refresh</div><div class="a" style="left:232px;top:167px;width:62px;height:72px;border:1px solid #fff"></div><div class="a" style="left:231px;top:166px;width:62px;height:72px;border:1px solid #a0a0a0"></div><div class="a" style="left:235px;top:172px;width:13px;height:13px;background:#fff;border-top:1px solid #a0a0a0;border-left:1px solid #a0a0a0;border-right:1px solid #fff;border-bottom:1px solid #fff;box-shadow:inset 1px 1px 0 #696969,inset -1px -1px 0 #e3e3e3"></div><svg style="left:235px;top:172px" width="13" height="13"><path d="M3 5.5L5 8L10 3" fill="none" stroke="#000" stroke-width="1.9"/></svg><div class="a" style="left:254px;top:171.6px;font-size:11.5px;letter-spacing:-0.3px;line-height:14px;white-space:nowrap;">CH1</div><div class="a" style="left:235px;top:188px;width:13px;height:13px;background:#fff;border-top:1px solid #a0a0a0;border-left:1px solid #a0a0a0;border-right:1px solid #fff;border-bottom:1px solid #fff;box-shadow:inset 1px 1px 0 #696969,inset -1px -1px 0 #e3e3e3"></div><svg style="left:235px;top:188px" width="13" height="13"><path d="M3 5.5L5 8L10 3" fill="none" stroke="#000" stroke-width="1.9"/></svg><div class="a" style="left:254px;top:187.6px;font-size:11.5px;letter-spacing:-0.3px;line-height:14px;white-space:nowrap;">CH2</div><div class="a" style="left:235px;top:204px;width:13px;height:13px;background:#f0f0f0;border-top:1px solid #a0a0a0;border-left:1px solid #a0a0a0;border-right:1px solid #fff;border-bottom:1px solid #fff;box-shadow:inset 1px 1px 0 #696969,inset -1px -1px 0 #e3e3e3"></div><div class="a" style="left:253px;top:203.6px;font-size:11.5px;letter-spacing:-0.3px;line-height:14px;white-space:nowrap;color:#a0a0a0">Math</div><div class="a" style="left:235px;top:220px;width:13px;height:13px;background:#f0f0f0;border-top:1px solid #a0a0a0;border-left:1px solid #a0a0a0;border-right:1px solid #fff;border-bottom:1px solid #fff;box-shadow:inset 1px 1px 0 #696969,inset -1px -1px 0 #e3e3e3"></div><div class="a" style="left:253px;top:219.6px;font-size:11.5px;letter-spacing:-0.3px;line-height:14px;white-space:nowrap;color:#a0a0a0">LA</div><div class="a" style="left:228px;top:256px;width:70px;height:137px;border:1px solid #fff"></div><div class="a" style="left:227px;top:255px;width:70px;height:137px;border:1px solid #a0a0a0"></div><div class="a" style="left:234.4px;top:248.2px;font-size:11.5px;letter-spacing:-0.3px;line-height:14px;background:#f0f0f0;padding:0 2px">Display</div><div class="a" style="left:232px;top:272px;width:62px;height:53px;border:1px solid #fff"></div><div class="a" style="left:231px;top:271px;width:62px;height:53px;border:1px solid #a0a0a0"></div><div class="a" style="left:237.5px;top:263.6px;font-size:11.5px;letter-spacing:-0.3px;line-height:14px;background:#f0f0f0;padding:0 2px">Zoom</div><div class="a" style="left:232px;top:281px;width:52px;height:18px;background:#fff;border-top:1px solid #a0a0a0;border-left:1px solid #a0a0a0;border-right:1px solid #fff;border-bottom:1px solid #fff;box-shadow:inset 1px 1px 0 #696969,inset -1px -1px 0 #e3e3e3"></div><div class="a" style="left:267px;top:283px;width:16px;height:15px;background:#f0f0f0;border-top:1px solid #f0f0f0;border-left:1px solid #f0f0f0;border-right:1px solid #696969;border-bottom:1px solid #696969;box-shadow:inset 1px 1px 0 #fff,inset -1px -1px 0 #a0a0a0"></div><svg style="left:0;top:0" width="877" height="622"><path d="M272 288h8l-4 4z" fill="#000"/></svg><div class="a" style="left:234.4px;top:282.7px;font-size:11.5px;letter-spacing:-0.3px;line-height:14px;white-space:nowrap;">150%</div><div class="a" style="left:235px;top:305px;width:13px;height:13px;background:#fff;border-top:1px solid #a0a0a0;border-left:1px solid #a0a0a0;border-right:1px solid #fff;border-bottom:1px solid #fff;box-shadow:inset 1px 1px 0 #696969,inset -1px -1px 0 #e3e3e3"></div><div class="a" style="left:253.6px;top:303.7px;font-size:11.5px;letter-spacing:-0.3px;line-height:14px;white-space:nowrap;">Best Fit</div><div class="a" style="left:232px;top:327px;width:62px;height:44px;border:1px solid #fff"></div><div class="a" style="left:231px;top:326px;width:62px;height:44px;border:1px solid #a0a0a0"></div><svg style="left:235px;top:332.5px" width="13" height="13"><path d="M11.5 3.5A5.5 5.5 0 0 0 1.5 9.5" fill="none" stroke="#a0a0a0"/><path d="M10.5 3.5A4.5 4.5 0 0 0 2.5 9" fill="none" stroke="#696969"/><circle cx="6.5" cy="6.5" r="4" fill="#fff"/><circle cx="6.5" cy="6.5" r="1.8" fill="#000"/><path d="M1.8 9.8A5.5 5.5 0 0 0 11.6 3.6" fill="none" stroke="#fff"/></svg><div class="a" style="left:253.7px;top:331.8px;font-size:11.5px;letter-spacing:-0.3px;line-height:14px;white-space:nowrap;">Color</div><svg style="left:235px;top:352.5px" width="13" height="13"><path d="M11.5 3.5A5.5 5.5 0 0 0 1.5 9.5" fill="none" stroke="#a0a0a0"/><path d="M10.5 3.5A4.5 4.5 0 0 0 2.5 9" fill="none" stroke="#696969"/><circle cx="6.5" cy="6.5" r="4" fill="#fff"/><path d="M1.8 9.8A5.5 5.5 0 0 0 11.6 3.6" fill="none" stroke="#fff"/></svg><div class="a" style="left:253.7px;top:351.9px;font-size:11.5px;letter-spacing:-0.3px;line-height:14px;white-space:nowrap;">B&amp;W</div><div class="a" style="left:235px;top:372px;width:13px;height:13px;background:#fff;border-top:1px solid #a0a0a0;border-left:1px solid #a0a0a0;border-right:1px solid #fff;border-bottom:1px solid #fff;box-shadow:inset 1px 1px 0 #696969,inset -1px -1px 0 #e3e3e3"></div><svg style="left:235px;top:372px" width="13" height="13"><path d="M3 5.5L5 8L10 3" fill="none" stroke="#000" stroke-width="1.9"/></svg><div class="a" style="left:259.7px;top:370.5px;font-size:11.5px;letter-spacing:-0.3px;line-height:14px;white-space:nowrap;">Grid</div><div class="a" style="left:228px;top:402px;width:70px;height:55px;border:1px solid #fff"></div><div class="a" style="left:227px;top:401px;width:70px;height:55px;border:1px solid #a0a0a0"></div><div class="a" style="left:234.6px;top:393.8px;font-size:11.5px;letter-spacing:-0.3px;line-height:14px;background:#f0f0f0;padding:0 2px">Cursor</div><div class="a" style="left:230px;top:412px;width:13px;height:13px;background:#fff;border-top:1px solid #a0a0a0;border-left:1px solid #a0a0a0;border-right:1px solid #fff;border-bottom:1px solid #fff;box-shadow:inset 1px 1px 0 #696969,inset -1px -1px 0 #e3e3e3"></div><div class="a" style="left:248.7px;top:410.5px;font-size:11.5px;letter-spacing:-0.3px;line-height:14px;white-space:nowrap;">CursorX</div><div class="a" style="left:230px;top:436px;width:13px;height:13px;background:#fff;border-top:1px solid #a0a0a0;border-left:1px solid #a0a0a0;border-right:1px solid #fff;border-bottom:1px solid #fff;box-shadow:inset 1px 1px 0 #696969,inset -1px -1px 0 #e3e3e3"></div><div class="a" style="left:248.7px;top:434.6px;font-size:11.5px;letter-spacing:-0.3px;line-height:14px;white-space:nowrap;">CursorY</div><div class="a" style="left:228px;top:465px;width:70px;height:80px;border:1px solid #fff"></div><div class="a" style="left:227px;top:464px;width:70px;height:80px;border:1px solid #a0a0a0"></div><div class="a" style="left:234.6px;top:457.6px;font-size:11.5px;letter-spacing:-0.3px;line-height:14px;background:#f0f0f0;padding:0 2px">Output</div><div class="a" style="left:258.3px;top:476.8px;font-size:11.5px;letter-spacing:-0.3px;line-height:14px;white-space:nowrap;">Export</div><div class="a" style="left:266.9px;top:499px;font-size:11.5px;letter-spacing:-0.3px;line-height:14px;white-space:nowrap;">Print</div><div class="a" style="left:258px;top:520.7px;font-size:11.5px;letter-spacing:-0.3px;line-height:14px;white-space:nowrap;">????</div><svg style="left:0;top:0" width="877" height="622">
<rect x="233" y="476" width="15" height="15" fill="#0000ff"/><rect x="235" y="477" width="11" height="7" fill="#008000"/><rect x="236" y="486" width="9" height="5" fill="#c0c0c0"/><rect x="240" y="487" width="2" height="3" fill="#404040"/><rect x="247" y="477" width="1" height="2" fill="#fff"/>
<path d="M236.5 499.5h8l2 3v3h-10z" fill="#fff" stroke="#000"/><path d="M233.5 505.5h15v6h-15z" fill="#d8d8d8" stroke="#000"/><rect x="238" y="507" width="6" height="1" fill="#ffd800"/><path d="M234 509h14" stroke="#000"/><path d="M236.5 511.5h9v1.5h-9z" fill="#fff" stroke="#000"/>
<rect x="245" y="520" width="4" height="15" fill="#c8c8c0"/><path d="M233.5 520.5h7l4 4v10h-11z" fill="#fff" stroke="#000"/><circle cx="242" cy="529" r="3" fill="#50e0f0" stroke="#000"/><path d="M244 531l4 4" stroke="#000" stroke-width="2"/>
</svg><!--/WAVE-->
<!--CHROME--><svg style="left:0;top:0" width="877" height="622"><rect x="229" y="96" width="16" height="16" rx="1" fill="#000"/><rect x="230" y="97" width="14" height="14" fill="#00f0f0"/><rect x="231" y="98" width="12" height="12" fill="#000"/><rect x="232" y="99" width="10" height="10" fill="#000090"/><rect x="232" y="102" width="2" height="1" fill="#00ff00"/><rect x="234" y="100" width="1" height="3" fill="#00ff00"/><rect x="234" y="100" width="3" height="1" fill="#00ff00"/><rect x="236" y="100" width="1" height="3" fill="#00ff00"/><rect x="236" y="102" width="2" height="1" fill="#00ff00"/><rect x="238" y="100" width="1" height="3" fill="#00ff00"/><rect x="238" y="100" width="3" height="1" fill="#00ff00"/><rect x="240" y="100" width="1" height="3" fill="#00ff00"/><rect x="240" y="102" width="2" height="1" fill="#00ff00"/><rect x="232" y="107" width="1" height="1" fill="#ffff00"/><rect x="233" y="106" width="1" height="1" fill="#ffff00"/><rect x="234" y="105" width="2" height="1" fill="#ffff00"/><rect x="236" y="106" width="1" height="1" fill="#ffff00"/><rect x="237" y="107" width="2" height="1" fill="#ffff00"/><rect x="239" y="106" width="1" height="1" fill="#ffff00"/><rect x="240" y="105" width="2" height="1" fill="#ffff00"/><g transform="translate(8,7)"><rect width="16" height="16" fill="#000"/><rect width="16" height="8" fill="#800000"/><path d="M1 6.5H3.5V2.5H7V6.5H9V2.5H12.5V6.5H15" fill="none" stroke="#ffff00" stroke-width="1.2"/><path d="M1 10.5H2.5L3 13.5L4 10L5 12L6 11.5L8 12.5L10 11L12 12L15 10.5" fill="none" stroke="#00e0e0" stroke-width="1.1"/></g></svg><div class="a" style="left:250px;top:97px;font-size:12px;color:#1a1a30;letter-spacing:-0.1px">Wave1</div><div class="a" style="left:741px;top:96px;width:31px;height:17px;border:1px solid #7186a3;border-radius:3px;background:linear-gradient(#dfe9f5 0,#cbdaec 45%,#aec3dd 55%,#c0d3ea 100%);box-shadow:inset 0 0 0 1px rgba(255,255,255,.5)"></div><div class="a" style="left:774px;top:96px;width:31px;height:17px;border:1px solid #7186a3;border-radius:3px;background:linear-gradient(#dfe9f5 0,#cbdaec 45%,#aec3dd 55%,#c0d3ea 100%);box-shadow:inset 0 0 0 1px rgba(255,255,255,.5)"></div><div class="a" style="left:807px;top:96px;width:31px;height:17px;border:1px solid #6a2a24;border-radius:3px;background:linear-gradient(#e8a090 0,#d8806c 45%,#c0402a 55%,#c85a40 100%);box-shadow:inset 0 0 0 1px rgba(255,255,255,.5)"></div><svg style="left:0;top:0" width="877" height="622"><rect x="751.5" y="103.5" width="11" height="3" fill="#fff" stroke="#3c4b60"/><rect x="784.5" y="100.5" width="10" height="8" fill="none" stroke="#3c4b60" stroke-width="1"/><rect x="785.5" y="101.5" width="8" height="6" fill="none" stroke="#fff" stroke-width="1"/><rect x="787.5" y="103.5" width="4" height="2" fill="#aab8cc" stroke="#3c4b60"/><path d="M818 100L826 108M826 100L818 108" stroke="#4a2a2a" stroke-width="3.6"/><path d="M818 100L826 108M826 100L818 108" stroke="#fff" stroke-width="2"/></svg><div class="a" style="left:767px;top:0px;width:29px;height:20px;border:1px solid #3a3a3a;border-top:none;border-radius:0 0 0 5px;background:linear-gradient(#b8b8b8 0,#a0a0a0 45%,#6a6a6a 55%,#585858 100%);box-shadow:inset 0 0 0 1px rgba(255,255,255,.45)"></div><div class="a" style="left:795px;top:0px;width:28px;height:20px;border:1px solid #3a3a3a;border-top:none;;background:linear-gradient(#b8b8b8 0,#a0a0a0 45%,#6a6a6a 55%,#585858 100%);box-shadow:inset 0 0 0 1px rgba(255,255,255,.45)"></div><div class="a" style="left:822px;top:0px;width:47px;height:20px;border:1px solid #3a3a3a;border-top:none;border-radius:0 0 5px 0;background:linear-gradient(#e4a08e 0,#d36a52 45%,#c0361c 55%,#d05a3c 100%);box-shadow:inset 0 0 0 1px rgba(255,255,255,.45)"></div><svg style="left:0;top:0" width="877" height="622"><rect x="776.5" y="10.5" width="10" height="3" fill="#fff" stroke="#303848"/><rect x="803.5" y="5.5" width="10" height="9" fill="none" stroke="#303848"/><rect x="804.5" y="6.5" width="8" height="7" fill="none" stroke="#fff" stroke-width="1"/><rect x="806.5" y="8.5" width="4" height="3" fill="#777" stroke="#303848"/><path d="M841 5L849 13M849 5L841 13" stroke="#303848" stroke-width="4"/><path d="M841 5L849 13M849 5L841 13" stroke="#fff" stroke-width="2.4"/></svg><!--/CHROME-->
<!--SCOPE--><svg class="a" style="left:0;top:0" width="877" height="622" viewBox="0 0 877 622"><rect x="326" y="149" width="452" height="2" fill="#c8c8c8"/><rect x="326" y="449" width="452" height="2" fill="#c8c8c8"/><rect x="326" y="149" width="2" height="302" fill="#c8c8c8"/><rect x="776" y="149" width="2" height="302" fill="#c8c8c8"/><path d="M665 255h1v1h-1zM365 390h1v1h-1zM403 255h1v1h-1zM515 307h1v1h-1zM703 367h1v1h-1zM658 225h1v1h-1zM740 187h1v1h-1zM440 420h1v1h-1zM478 285h1v1h-1zM590 337h1v1h-1zM628 202h1v1h-1zM688 262h1v1h-1zM448 262h1v1h-1zM365 255h1v1h-1zM515 172h1v1h-1zM665 367h1v1h-1zM703 232h1v1h-1zM620 225h1v1h-1zM403 367h1v1h-1zM358 225h1v1h-1zM658 337h1v1h-1zM440 285h1v1h-1zM590 202h1v1h-1zM478 397h1v1h-1zM650 262h1v1h-1zM410 262h1v1h-1zM770 187h1v1h-1zM665 232h1v1h-1zM508 187h1v1h-1zM560 225h1v1h-1zM365 367h1v1h-1zM403 232h1v1h-1zM620 337h1v1h-1zM358 337h1v1h-1zM718 262h1v1h-1zM440 397h1v1h-1zM478 262h1v1h-1zM740 420h1v1h-1zM388 225h1v1h-1zM470 187h1v1h-1zM365 232h1v1h-1zM560 337h1v1h-1zM680 262h1v1h-1zM673 375h1v1h-1zM440 262h1v1h-1zM418 262h1v1h-1zM740 285h1v1h-1zM538 187h1v1h-1zM350 225h1v1h-1zM388 337h1v1h-1zM748 262h1v1h-1zM380 262h1v1h-1zM373 375h1v1h-1zM500 187h1v1h-1zM628 345h1v1h-1zM740 397h1v1h-1zM350 337h1v1h-1zM710 262h1v1h-1zM688 225h1v1h-1zM515 315h1v1h-1zM703 375h1v1h-1zM568 187h1v1h-1zM335 375h1v1h-1zM590 345h1v1h-1zM628 210h1v1h-1zM740 262h1v1h-1zM733 412h1v1h-1zM598 187h1v1h-1zM650 225h1v1h-1zM515 180h1v1h-1zM665 375h1v1h-1zM703 240h1v1h-1zM410 225h1v1h-1zM403 375h1v1h-1zM643 375h1v1h-1zM515 427h1v1h-1zM530 187h1v1h-1zM590 210h1v1h-1zM478 405h1v1h-1zM628 322h1v1h-1zM718 225h1v1h-1zM440 360h1v1h-1zM665 240h1v1h-1zM365 375h1v1h-1zM403 240h1v1h-1zM515 292h1v1h-1zM703 352h1v1h-1zM770 262h1v1h-1zM763 412h1v1h-1zM508 262h1v1h-1zM523 412h1v1h-1zM478 270h1v1h-1zM590 322h1v1h-1zM628 187h1v1h-1zM680 225h1v1h-1zM440 225h1v1h-1zM418 225h1v1h-1zM433 375h1v1h-1zM365 240h1v1h-1zM515 157h1v1h-1zM665 352h1v1h-1zM703 217h1v1h-1zM403 352h1v1h-1zM748 225h1v1h-1zM470 262h1v1h-1zM463 412h1v1h-1zM590 187h1v1h-1zM478 382h1v1h-1zM380 225h1v1h-1zM395 375h1v1h-1zM665 217h1v1h-1zM538 262h1v1h-1zM365 352h1v1h-1zM403 217h1v1h-1zM658 187h1v1h-1zM710 225h1v1h-1zM440 382h1v1h-1zM478 247h1v1h-1zM740 405h1v1h-1zM733 375h1v1h-1zM500 262h1v1h-1zM365 217h1v1h-1zM620 187h1v1h-1zM358 187h1v1h-1zM440 247h1v1h-1zM740 270h1v1h-1zM568 262h1v1h-1zM695 375h1v1h-1zM590 420h1v1h-1zM560 187h1v1h-1zM515 435h1v1h-1zM703 315h1v1h-1zM763 375h1v1h-1zM530 262h1v1h-1zM628 330h1v1h-1zM523 375h1v1h-1zM740 382h1v1h-1zM590 285h1v1h-1zM388 187h1v1h-1zM515 300h1v1h-1zM665 315h1v1h-1zM703 180h1v1h-1zM553 412h1v1h-1zM403 315h1v1h-1zM673 337h1v1h-1zM725 375h1v1h-1zM628 195h1v1h-1zM463 375h1v1h-1zM740 247h1v1h-1zM628 442h1v1h-1zM350 187h1v1h-1zM478 345h1v1h-1zM515 165h1v1h-1zM515 412h1v1h-1zM665 180h1v1h-1zM365 315h1v1h-1zM403 180h1v1h-1zM373 337h1v1h-1zM425 375h1v1h-1zM590 442h1v1h-1zM628 307h1v1h-1zM440 345h1v1h-1zM478 210h1v1h-1zM583 412h1v1h-1zM688 187h1v1h-1zM515 277h1v1h-1zM703 337h1v1h-1zM755 375h1v1h-1zM365 180h1v1h-1zM493 375h1v1h-1zM335 337h1v1h-1zM628 172h1v1h-1zM590 307h1v1h-1zM440 210h1v1h-1zM545 412h1v1h-1zM650 187h1v1h-1zM665 337h1v1h-1zM703 202h1v1h-1zM410 187h1v1h-1zM403 337h1v1h-1zM455 375h1v1h-1zM590 172h1v1h-1zM613 412h1v1h-1zM478 367h1v1h-1zM718 187h1v1h-1zM440 322h1v1h-1zM740 345h1v1h-1zM665 202h1v1h-1zM365 337h1v1h-1zM403 202h1v1h-1zM560 262h1v1h-1zM575 412h1v1h-1zM553 375h1v1h-1zM478 232h1v1h-1zM680 187h1v1h-1zM440 187h1v1h-1zM418 187h1v1h-1zM433 337h1v1h-1zM485 375h1v1h-1zM740 210h1v1h-1zM628 405h1v1h-1zM365 202h1v1h-1zM748 187h1v1h-1zM515 375h1v1h-1zM703 435h1v1h-1zM380 187h1v1h-1zM395 337h1v1h-1zM733 225h1v1h-1zM673 412h1v1h-1zM590 405h1v1h-1zM628 270h1v1h-1zM583 375h1v1h-1zM343 412h1v1h-1zM710 187h1v1h-1zM515 240h1v1h-1zM665 435h1v1h-1zM703 300h1v1h-1zM403 435h1v1h-1zM740 367h1v1h-1zM590 270h1v1h-1zM373 412h1v1h-1zM733 337h1v1h-1zM628 382h1v1h-1zM545 375h1v1h-1zM665 300h1v1h-1zM703 165h1v1h-1zM365 435h1v1h-1zM403 300h1v1h-1zM515 352h1v1h-1zM703 412h1v1h-1zM763 225h1v1h-1zM523 225h1v1h-1zM740 232h1v1h-1zM613 375h1v1h-1zM335 412h1v1h-1zM478 330h1v1h-1zM695 337h1v1h-1zM590 382h1v1h-1zM628 247h1v1h-1zM665 165h1v1h-1zM553 262h1v1h-1zM365 300h1v1h-1zM403 165h1v1h-1zM515 217h1v1h-1zM665 412h1v1h-1zM703 277h1v1h-1zM643 412h1v1h-1zM403 412h1v1h-1zM463 225h1v1h-1zM763 337h1v1h-1zM523 337h1v1h-1zM575 375h1v1h-1zM440 330h1v1h-1zM478 195h1v1h-1zM590 247h1v1h-1zM478 442h1v1h-1zM365 165h1v1h-1zM665 277h1v1h-1zM605 412h1v1h-1zM365 412h1v1h-1zM403 277h1v1h-1zM725 337h1v1h-1zM463 337h1v1h-1zM440 195h1v1h-1zM583 262h1v1h-1zM440 442h1v1h-1zM478 307h1v1h-1zM493 225h1v1h-1zM433 412h1v1h-1zM365 277h1v1h-1zM343 375h1v1h-1zM425 337h1v1h-1zM440 307h1v1h-1zM478 172h1v1h-1zM740 330h1v1h-1zM635 412h1v1h-1zM395 412h1v1h-1zM755 337h1v1h-1zM493 337h1v1h-1zM613 262h1v1h-1zM440 172h1v1h-1zM740 195h1v1h-1zM628 390h1v1h-1zM740 442h1v1h-1zM455 337h1v1h-1zM515 360h1v1h-1zM703 420h1v1h-1zM553 225h1v1h-1zM590 390h1v1h-1zM628 255h1v1h-1zM740 307h1v1h-1zM695 412h1v1h-1zM515 225h1v1h-1zM665 420h1v1h-1zM703 285h1v1h-1zM403 420h1v1h-1zM553 337h1v1h-1zM605 375h1v1h-1zM673 262h1v1h-1zM590 255h1v1h-1zM485 337h1v1h-1zM740 172h1v1h-1zM628 367h1v1h-1zM583 225h1v1h-1zM440 405h1v1h-1zM343 262h1v1h-1zM665 285h1v1h-1zM365 420h1v1h-1zM403 285h1v1h-1zM515 337h1v1h-1zM703 397h1v1h-1zM373 262h1v1h-1zM478 315h1v1h-1zM733 187h1v1h-1zM725 412h1v1h-1zM590 367h1v1h-1zM628 232h1v1h-1zM545 225h1v1h-1zM440 270h1v1h-1zM583 337h1v1h-1zM635 375h1v1h-1zM365 285h1v1h-1zM515 202h1v1h-1zM665 397h1v1h-1zM703 262h1v1h-1zM403 397h1v1h-1zM613 225h1v1h-1zM335 262h1v1h-1zM478 180h1v1h-1zM590 232h1v1h-1zM425 412h1v1h-1zM478 427h1v1h-1zM545 337h1v1h-1zM665 262h1v1h-1zM643 262h1v1h-1zM365 397h1v1h-1zM403 262h1v1h-1zM763 187h1v1h-1zM755 412h1v1h-1zM523 187h1v1h-1zM575 225h1v1h-1zM493 412h1v1h-1zM613 337h1v1h-1zM440 427h1v1h-1zM478 292h1v1h-1zM605 262h1v1h-1zM598 375h1v1h-1zM365 262h1v1h-1zM463 187h1v1h-1zM455 412h1v1h-1zM575 337h1v1h-1zM440 292h1v1h-1zM478 157h1v1h-1zM740 315h1v1h-1zM673 225h1v1h-1zM433 262h1v1h-1zM343 225h1v1h-1zM703 360h1v1h-1zM440 157h1v1h-1zM740 180h1v1h-1zM635 262h1v1h-1zM628 375h1v1h-1zM395 262h1v1h-1zM373 225h1v1h-1zM740 427h1v1h-1zM590 330h1v1h-1zM493 187h1v1h-1zM485 412h1v1h-1zM515 345h1v1h-1zM343 337h1v1h-1zM665 360h1v1h-1zM703 225h1v1h-1zM403 360h1v1h-1zM628 240h1v1h-1zM335 225h1v1h-1zM740 292h1v1h-1zM590 195h1v1h-1zM478 390h1v1h-1zM733 262h1v1h-1zM515 210h1v1h-1zM665 225h1v1h-1zM643 225h1v1h-1zM365 360h1v1h-1zM403 225h1v1h-1zM740 157h1v1h-1zM628 352h1v1h-1zM440 390h1v1h-1zM478 255h1v1h-1zM695 262h1v1h-1zM448 412h1v1h-1zM515 322h1v1h-1zM703 382h1v1h-1zM553 187h1v1h-1zM605 225h1v1h-1zM365 225h1v1h-1zM643 337h1v1h-1zM763 262h1v1h-1zM590 352h1v1h-1zM628 217h1v1h-1zM523 262h1v1h-1zM440 255h1v1h-1zM433 225h1v1h-1zM515 187h1v1h-1zM665 382h1v1h-1zM703 247h1v1h-1zM403 382h1v1h-1zM605 337h1v1h-1zM725 262h1v1h-1zM590 217h1v1h-1zM463 262h1v1h-1zM478 412h1v1h-1zM583 187h1v1h-1zM635 225h1v1h-1zM440 367h1v1h-1zM395 225h1v1h-1zM740 390h1v1h-1zM665 247h1v1h-1zM365 382h1v1h-1zM403 247h1v1h-1zM425 262h1v1h-1zM478 277h1v1h-1zM545 187h1v1h-1zM440 232h1v1h-1zM740 255h1v1h-1zM635 337h1v1h-1zM365 247h1v1h-1zM755 262h1v1h-1zM493 262h1v1h-1zM613 187h1v1h-1zM515 420h1v1h-1zM628 315h1v1h-1zM695 225h1v1h-1zM688 375h1v1h-1zM455 262h1v1h-1zM448 375h1v1h-1zM575 187h1v1h-1zM515 285h1v1h-1zM703 345h1v1h-1zM740 412h1v1h-1zM590 315h1v1h-1zM628 180h1v1h-1zM628 427h1v1h-1zM650 375h1v1h-1zM410 375h1v1h-1zM665 345h1v1h-1zM703 210h1v1h-1zM403 345h1v1h-1zM515 397h1v1h-1zM740 277h1v1h-1zM673 187h1v1h-1zM725 225h1v1h-1zM590 180h1v1h-1zM485 262h1v1h-1zM718 375h1v1h-1zM478 375h1v1h-1zM590 427h1v1h-1zM628 292h1v1h-1zM343 187h1v1h-1zM665 210h1v1h-1zM365 345h1v1h-1zM403 210h1v1h-1zM770 412h1v1h-1zM515 262h1v1h-1zM703 322h1v1h-1zM508 412h1v1h-1zM680 375h1v1h-1zM373 187h1v1h-1zM425 225h1v1h-1zM440 375h1v1h-1zM478 240h1v1h-1zM418 375h1v1h-1zM590 292h1v1h-1zM628 157h1v1h-1zM365 210h1v1h-1zM665 322h1v1h-1zM703 187h1v1h-1zM755 225h1v1h-1zM748 375h1v1h-1zM403 322h1v1h-1zM470 412h1v1h-1zM335 187h1v1h-1zM440 240h1v1h-1zM380 375h1v1h-1zM590 157h1v1h-1zM478 352h1v1h-1zM545 262h1v1h-1zM538 412h1v1h-1zM665 187h1v1h-1zM643 187h1v1h-1zM710 375h1v1h-1zM365 322h1v1h-1zM403 187h1v1h-1zM455 225h1v1h-1zM440 352h1v1h-1zM478 217h1v1h-1zM740 375h1v1h-1zM500 412h1v1h-1zM605 187h1v1h-1zM365 187h1v1h-1zM575 262h1v1h-1zM440 217h1v1h-1zM568 412h1v1h-1zM740 240h1v1h-1zM628 435h1v1h-1zM433 187h1v1h-1zM485 225h1v1h-1zM598 412h1v1h-1zM515 405h1v1h-1zM770 375h1v1h-1zM530 412h1v1h-1zM508 375h1v1h-1zM635 187h1v1h-1zM590 435h1v1h-1zM628 300h1v1h-1zM395 187h1v1h-1zM740 352h1v1h-1zM515 270h1v1h-1zM703 330h1v1h-1zM470 375h1v1h-1zM590 300h1v1h-1zM628 165h1v1h-1zM740 217h1v1h-1zM628 412h1v1h-1zM448 225h1v1h-1zM665 330h1v1h-1zM703 195h1v1h-1zM538 375h1v1h-1zM403 330h1v1h-1zM515 382h1v1h-1zM703 442h1v1h-1zM590 165h1v1h-1zM478 360h1v1h-1zM590 412h1v1h-1zM628 277h1v1h-1zM440 315h1v1h-1zM695 187h1v1h-1zM688 337h1v1h-1zM665 195h1v1h-1zM448 337h1v1h-1zM500 375h1v1h-1zM365 330h1v1h-1zM403 195h1v1h-1zM515 247h1v1h-1zM665 442h1v1h-1zM703 307h1v1h-1zM403 442h1v1h-1zM658 412h1v1h-1zM478 225h1v1h-1zM590 277h1v1h-1zM440 180h1v1h-1zM568 375h1v1h-1zM650 337h1v1h-1zM410 337h1v1h-1zM365 195h1v1h-1zM665 307h1v1h-1zM703 172h1v1h-1zM365 442h1v1h-1zM403 307h1v1h-1zM620 412h1v1h-1zM358 412h1v1h-1zM725 187h1v1h-1zM718 337h1v1h-1zM478 337h1v1h-1zM530 375h1v1h-1zM665 172h1v1h-1zM365 307h1v1h-1zM403 172h1v1h-1zM560 412h1v1h-1zM680 337h1v1h-1zM425 187h1v1h-1zM440 337h1v1h-1zM478 202h1v1h-1zM418 337h1v1h-1zM740 360h1v1h-1zM365 172h1v1h-1zM388 412h1v1h-1zM755 187h1v1h-1zM748 337h1v1h-1zM703 405h1v1h-1zM440 202h1v1h-1zM380 337h1v1h-1zM740 225h1v1h-1zM628 420h1v1h-1zM590 375h1v1h-1zM350 412h1v1h-1zM710 337h1v1h-1zM455 187h1v1h-1zM515 390h1v1h-1zM665 405h1v1h-1zM703 270h1v1h-1zM403 405h1v1h-1zM628 285h1v1h-1zM658 375h1v1h-1zM740 337h1v1h-1zM590 240h1v1h-1zM478 435h1v1h-1zM598 262h1v1h-1zM515 255h1v1h-1zM770 225h1v1h-1zM688 412h1v1h-1zM665 270h1v1h-1zM508 225h1v1h-1zM365 405h1v1h-1zM403 270h1v1h-1zM620 375h1v1h-1zM740 202h1v1h-1zM358 375h1v1h-1zM628 397h1v1h-1zM485 187h1v1h-1zM440 435h1v1h-1zM478 300h1v1h-1zM650 412h1v1h-1zM515 367h1v1h-1zM703 427h1v1h-1zM470 225h1v1h-1zM410 412h1v1h-1zM365 270h1v1h-1zM770 337h1v1h-1zM508 337h1v1h-1zM560 375h1v1h-1zM590 397h1v1h-1zM628 262h1v1h-1zM440 300h1v1h-1zM478 165h1v1h-1zM718 412h1v1h-1zM538 225h1v1h-1zM515 232h1v1h-1zM665 427h1v1h-1zM703 292h1v1h-1zM403 427h1v1h-1zM388 375h1v1h-1zM470 337h1v1h-1zM590 262h1v1h-1zM440 165h1v1h-1zM680 412h1v1h-1zM440 412h1v1h-1zM448 187h1v1h-1zM500 225h1v1h-1zM418 412h1v1h-1zM740 435h1v1h-1zM665 292h1v1h-1zM703 157h1v1h-1zM538 337h1v1h-1zM365 427h1v1h-1zM403 292h1v1h-1zM350 375h1v1h-1zM658 262h1v1h-1zM748 412h1v1h-1zM478 322h1v1h-1zM568 225h1v1h-1zM440 277h1v1h-1zM380 412h1v1h-1zM740 300h1v1h-1zM665 157h1v1h-1zM500 337h1v1h-1zM365 292h1v1h-1zM403 157h1v1h-1zM620 262h1v1h-1zM598 225h1v1h-1zM358 262h1v1h-1zM710 412h1v1h-1zM478 187h1v1h-1zM530 225h1v1h-1zM568 337h1v1h-1zM740 165h1v1h-1zM628 360h1v1h-1zM365 157h1v1h-1zM598 337h1v1h-1zM515 330h1v1h-1zM703 390h1v1h-1zM530 337h1v1h-1zM590 360h1v1h-1zM628 225h1v1h-1zM388 262h1v1h-1zM515 195h1v1h-1zM665 390h1v1h-1zM703 255h1v1h-1zM403 390h1v1h-1zM515 442h1v1h-1zM740 322h1v1h-1zM590 225h1v1h-1zM350 262h1v1h-1zM478 420h1v1h-1zM628 337h1v1h-1z" fill="#c8c8c8"/><path d="M335 151h1v1h-1z M335 447h1v2h-1zM343 151h1v1h-1z M343 447h1v2h-1zM350 151h1v1h-1z M350 447h1v2h-1zM358 151h1v1h-1z M358 447h1v2h-1zM365 151h1v1h-1z M365 447h1v2h-1zM373 151h1v1h-1z M373 447h1v2h-1zM380 151h1v1h-1z M380 447h1v2h-1zM388 151h1v1h-1z M388 447h1v2h-1zM395 151h1v1h-1z M395 447h1v2h-1zM403 151h1v1h-1z M403 447h1v2h-1zM410 151h1v1h-1z M410 447h1v2h-1zM418 151h1v1h-1z M418 447h1v2h-1zM425 151h1v1h-1z M425 447h1v2h-1zM433 151h1v1h-1z M433 447h1v2h-1zM440 151h1v1h-1z M440 447h1v2h-1zM448 151h1v1h-1z M448 447h1v2h-1zM455 151h1v1h-1z M455 447h1v2h-1zM463 151h1v1h-1z M463 447h1v2h-1zM470 151h1v1h-1z M470 447h1v2h-1zM478 151h1v1h-1z M478 447h1v2h-1zM485 151h1v1h-1z M485 447h1v2h-1zM493 151h1v1h-1z M493 447h1v2h-1zM500 151h1v1h-1z M500 447h1v2h-1zM508 151h1v1h-1z M508 447h1v2h-1zM515 151h1v1h-1z M515 447h1v2h-1zM523 151h1v1h-1z M523 447h1v2h-1zM530 151h1v1h-1z M530 447h1v2h-1zM538 151h1v1h-1z M538 447h1v2h-1zM545 151h1v1h-1z M545 447h1v2h-1zM553 151h1v1h-1z M553 447h1v2h-1zM560 151h1v1h-1z M560 447h1v2h-1zM568 151h1v1h-1z M568 447h1v2h-1zM575 151h1v1h-1z M575 447h1v2h-1zM583 151h1v1h-1z M583 447h1v2h-1zM590 151h1v1h-1z M590 447h1v2h-1zM598 151h1v1h-1z M598 447h1v2h-1zM605 151h1v1h-1z M605 447h1v2h-1zM613 151h1v1h-1z M613 447h1v2h-1zM620 151h1v1h-1z M620 447h1v2h-1zM628 151h1v1h-1z M628 447h1v2h-1zM635 151h1v1h-1z M635 447h1v2h-1zM643 151h1v1h-1z M643 447h1v2h-1zM650 151h1v1h-1z M650 447h1v2h-1zM658 151h1v1h-1z M658 447h1v2h-1zM665 151h1v1h-1z M665 447h1v2h-1zM673 151h1v1h-1z M673 447h1v2h-1zM680 151h1v1h-1z M680 447h1v2h-1zM688 151h1v1h-1z M688 447h1v2h-1zM695 151h1v1h-1z M695 447h1v2h-1zM703 151h1v1h-1z M703 447h1v2h-1zM710 151h1v1h-1z M710 447h1v2h-1zM718 151h1v1h-1z M718 447h1v2h-1zM725 151h1v1h-1z M725 447h1v2h-1zM733 151h1v1h-1z M733 447h1v2h-1zM740 151h1v1h-1z M740 447h1v2h-1zM748 151h1v1h-1z M748 447h1v2h-1zM755 151h1v1h-1z M755 447h1v2h-1zM763 151h1v1h-1z M763 447h1v2h-1zM770 151h1v1h-1z M770 447h1v2h-1zM328 157h1v1h-1z M774 157h2v1h-2zM328 165h1v1h-1z M774 165h2v1h-2zM328 172h1v1h-1z M774 172h2v1h-2zM328 180h1v1h-1z M774 180h2v1h-2zM328 187h1v1h-1z M774 187h2v1h-2zM328 195h1v1h-1z M774 195h2v1h-2zM328 202h1v1h-1z M774 202h2v1h-2zM328 210h1v1h-1z M774 210h2v1h-2zM328 217h1v1h-1z M774 217h2v1h-2zM328 225h1v1h-1z M774 225h2v1h-2zM328 232h1v1h-1z M774 232h2v1h-2zM328 240h1v1h-1z M774 240h2v1h-2zM328 247h1v1h-1z M774 247h2v1h-2zM328 255h1v1h-1z M774 255h2v1h-2zM328 262h1v1h-1z M774 262h2v1h-2zM328 270h1v1h-1z M774 270h2v1h-2zM328 277h1v1h-1z M774 277h2v1h-2zM328 285h1v1h-1z M774 285h2v1h-2zM328 292h1v1h-1z M774 292h2v1h-2zM328 300h1v1h-1z M774 300h2v1h-2zM328 307h1v1h-1z M774 307h2v1h-2zM328 315h1v1h-1z M774 315h2v1h-2zM328 322h1v1h-1z M774 322h2v1h-2zM328 330h1v1h-1z M774 330h2v1h-2zM328 337h1v1h-1z M774 337h2v1h-2zM328 345h1v1h-1z M774 345h2v1h-2zM328 352h1v1h-1z M774 352h2v1h-2zM328 360h1v1h-1z M774 360h2v1h-2zM328 367h1v1h-1z M774 367h2v1h-2zM328 375h1v1h-1z M774 375h2v1h-2zM328 382h1v1h-1z M774 382h2v1h-2zM328 390h1v1h-1z M774 390h2v1h-2zM328 397h1v1h-1z M774 397h2v1h-2zM328 405h1v1h-1z M774 405h2v1h-2zM328 412h1v1h-1z M774 412h2v1h-2zM328 420h1v1h-1z M774 420h2v1h-2zM328 427h1v1h-1z M774 427h2v1h-2zM328 435h1v1h-1z M774 435h2v1h-2zM328 442h1v1h-1z M774 442h2v1h-2zM552 151h1v298h-1z M328 300h448v1h-448zM335 299h1v3h-1zM343 299h1v3h-1zM350 299h1v3h-1zM358 299h1v3h-1zM365 297h1v7h-1zM373 299h1v3h-1zM380 299h1v3h-1zM388 299h1v3h-1zM395 299h1v3h-1zM403 297h1v7h-1zM410 299h1v3h-1zM418 299h1v3h-1zM425 299h1v3h-1zM433 299h1v3h-1zM440 297h1v7h-1zM448 299h1v3h-1zM455 299h1v3h-1zM463 299h1v3h-1zM470 299h1v3h-1zM478 297h1v7h-1zM485 299h1v3h-1zM493 299h1v3h-1zM500 299h1v3h-1zM508 299h1v3h-1zM515 297h1v7h-1zM523 299h1v3h-1zM530 299h1v3h-1zM538 299h1v3h-1zM545 299h1v3h-1zM553 297h1v7h-1zM560 299h1v3h-1zM568 299h1v3h-1zM575 299h1v3h-1zM583 299h1v3h-1zM590 297h1v7h-1zM598 299h1v3h-1zM605 299h1v3h-1zM613 299h1v3h-1zM620 299h1v3h-1zM628 297h1v7h-1zM635 299h1v3h-1zM643 299h1v3h-1zM650 299h1v3h-1zM658 299h1v3h-1zM665 297h1v7h-1zM673 299h1v3h-1zM680 299h1v3h-1zM688 299h1v3h-1zM695 299h1v3h-1zM703 297h1v7h-1zM710 299h1v3h-1zM718 299h1v3h-1zM725 299h1v3h-1zM733 299h1v3h-1zM740 297h1v7h-1zM748 299h1v3h-1zM755 299h1v3h-1zM763 299h1v3h-1zM770 299h1v3h-1zM551 157h3v1h-3zM551 165h3v1h-3zM551 172h3v1h-3zM551 180h3v1h-3zM549 187h7v1h-7zM551 195h3v1h-3zM551 202h3v1h-3zM551 210h3v1h-3zM551 217h3v1h-3zM549 225h7v1h-7zM551 232h3v1h-3zM551 240h3v1h-3zM551 247h3v1h-3zM551 255h3v1h-3zM549 262h7v1h-7zM551 270h3v1h-3zM551 277h3v1h-3zM551 285h3v1h-3zM551 292h3v1h-3zM549 300h7v1h-7zM551 307h3v1h-3zM551 315h3v1h-3zM551 322h3v1h-3zM551 330h3v1h-3zM549 337h7v1h-7zM551 345h3v1h-3zM551 352h3v1h-3zM551 360h3v1h-3zM551 367h3v1h-3zM549 375h7v1h-7zM551 382h3v1h-3zM551 390h3v1h-3zM551 397h3v1h-3zM551 405h3v1h-3zM549 412h7v1h-7zM551 420h3v1h-3zM551 427h3v1h-3zM551 435h3v1h-3zM551 442h3v1h-3z" fill="#c8c8c8"/><polyline points="328.0,415.3 329.5,416.6 331.0,417.0 332.5,416.6 334.0,415.3 335.5,413.1 337.0,410.2 338.5,406.5 340.0,402.2 341.5,397.2 343.0,391.8 344.5,386.0 346.0,379.9 347.5,373.7 349.0,367.4 350.5,361.2 352.0,355.3 353.5,349.6 355.0,344.4 356.5,339.7 358.0,335.7 359.5,332.4 361.0,329.8 362.5,328.0 364.0,327.5 365.5,327.5 367.0,327.9 368.5,329.6 370.0,332.2 371.5,335.4 373.0,339.4 374.5,344.1 376.0,349.3 377.5,354.9 379.0,360.8 380.5,367.0 382.0,373.3 383.5,379.5 385.0,385.6 386.5,391.4 388.0,396.9 389.5,401.8 391.0,406.2 392.5,410.0 394.0,412.9 395.5,415.1 397.0,416.5 398.5,417.0 400.0,416.6 401.5,415.4 403.0,413.3 404.5,410.4 406.0,406.8 407.5,402.5 409.0,397.6 410.5,392.2 412.0,386.4 413.5,380.3 415.0,374.1 416.5,367.8 418.0,361.6 419.5,355.7 421.0,350.0 422.5,344.7 424.0,340.0 425.5,335.9 427.0,332.6 428.5,329.9 430.0,328.1 431.5,327.5 433.0,327.5 434.5,327.9 436.0,329.5 437.5,332.0 439.0,335.2 440.5,339.2 442.0,343.8 443.5,348.9 445.0,354.5 446.5,360.4 448.0,366.6 449.5,372.8 451.0,379.1 452.5,385.2 454.0,391.0 455.5,396.5 457.0,401.5 458.5,406.0 460.0,409.7 461.5,412.8 463.0,415.0 464.5,416.4 466.0,417.0 467.5,416.7 469.0,415.5 470.5,413.5 472.0,410.6 473.5,407.0 475.0,402.8 476.5,397.9 478.0,392.5 479.5,386.8 481.0,380.7 482.5,374.5 484.0,368.2 485.5,362.0 487.0,356.0 488.5,350.4 490.0,345.1 491.5,340.3 493.0,336.2 494.5,332.8 496.0,330.1 497.5,328.2 499.0,327.5 500.5,327.5 502.0,327.8 503.5,329.4 505.0,331.8 506.5,335.0 508.0,338.9 509.5,343.4 511.0,348.5 512.5,354.1 514.0,360.0 515.5,366.2 517.0,372.4 518.5,378.7 520.0,384.8 521.5,390.7 523.0,396.2 524.5,401.2 526.0,405.7 527.5,409.5 529.0,412.6 530.5,414.9 532.0,416.4 533.5,417.0 535.0,416.7 536.5,415.6 538.0,413.6 539.5,410.8 541.0,407.3 542.5,403.1 544.0,398.2 545.5,392.9 547.0,387.2 548.5,381.1 550.0,374.9 551.5,368.7 553.0,362.5 554.5,356.4 556.0,350.7 557.5,345.4 559.0,340.6 560.5,336.4 562.0,333.0 563.5,330.2 565.0,328.3 566.5,327.5 568.0,327.5 569.5,327.7 571.0,329.2 572.5,331.6 574.0,334.7 575.5,338.6 577.0,343.1 578.5,348.2 580.0,353.7 581.5,359.6 583.0,365.7 584.5,372.0 586.0,378.3 587.5,384.4 589.0,390.3 590.5,395.8 592.0,400.9 593.5,405.4 595.0,409.3 596.5,412.4 598.0,414.8 599.5,416.3 601.0,417.0 602.5,416.8 604.0,415.7 605.5,413.8 607.0,411.0 608.5,407.6 610.0,403.4 611.5,398.6 613.0,393.3 614.5,387.6 616.0,381.5 617.5,375.3 619.0,369.1 620.5,362.9 622.0,356.8 623.5,351.1 625.0,345.8 626.5,340.9 628.0,336.7 629.5,333.2 631.0,330.4 632.5,328.4 634.0,327.5 635.5,327.5 637.0,327.6 638.5,329.1 640.0,331.4 641.5,334.5 643.0,338.3 644.5,342.8 646.0,347.8 647.5,353.3 649.0,359.2 650.5,365.3 652.0,371.6 653.5,377.8 655.0,384.0 656.5,389.9 658.0,395.5 659.5,400.6 661.0,405.1 662.5,409.0 664.0,412.2 665.5,414.6 667.0,416.2 668.5,417.0 670.0,416.8 671.5,415.8 673.0,413.9 674.5,411.2 676.0,407.8 677.5,403.7 679.0,398.9 680.5,393.6 682.0,388.0 683.5,382.0 685.0,375.8 686.5,369.5 688.0,363.3 689.5,357.2 691.0,351.5 692.5,346.1 694.0,341.2 695.5,337.0 697.0,333.4 698.5,330.5 700.0,328.5 701.5,327.5 703.0,327.5 704.5,327.6 706.0,329.0 707.5,331.2 709.0,334.3 710.5,338.0 712.0,342.5 713.5,347.5 715.0,353.0 716.5,358.8 718.0,364.9 719.5,371.2 721.0,377.4 722.5,383.6 724.0,389.5 725.5,395.1 727.0,400.2 728.5,404.8 730.0,408.8 731.5,412.0 733.0,414.5 734.5,416.1 736.0,416.9 737.5,416.8 739.0,415.9 740.5,414.1 742.0,411.4 743.5,408.1 745.0,404.0 746.5,399.3 748.0,394.0 749.5,388.3 751.0,382.4 752.5,376.2 754.0,369.9 755.5,363.7 757.0,357.6 758.5,351.8 760.0,346.4 761.5,341.5 763.0,337.2 764.5,333.6 766.0,330.7 767.5,328.6 769.0,327.5 770.5,327.5 772.0,327.5 773.5,328.9 775.0,331.1 776.5,334.0" fill="none" stroke="#12e2ea" stroke-width="1.2"/><path d="M328 222.5 H334 L335 225.0 L336 222.5 H336 L337.5 220.5 H340.5 L342 222.5 H353 L354.5 220.5 H359.5 L361 222.5 H372 L373.5 220.5 H381.5 L383 222.5 H390 L391 225.0 L392 222.5 H392 L393.5 220.5 H396.5 L398 222.5 H420 L421 225.0 L422 222.5 H429 L430.5 220.5 H434.5 L436 222.5 H442 L443 225.0 L444 222.5 H448 L449.5 220.5 H453.5 L455 222.5 H467 L468.5 220.5 H471.5 L473 222.5 H473 L474.5 224.5 H476.5 L478 222.5 H484 L485 225.0 L486 222.5 H496 L497 225.0 L498 222.5 H502 L503 225.0 L504 222.5 H505 L506.5 220.5 H511.5 L513 222.5 H514 L515.5 224.5 H517.5 L519 222.5 H523 L524.5 220.5 H528.5 L530 222.5 H540 L541 225.0 L542 222.5 H560 L561.5 220.5 H569.5 L571 222.5 H589 L590 225.0 L591 222.5 H596 L597 225.0 L598 222.5 H598 L599.5 220.5 H603.5 L605 222.5 H607 L608 225.0 L609 222.5 H616 L617.5 220.5 H621.5 L623 222.5 H630 L631 225.0 L632 222.5 H652 L653 225.0 L654 222.5 H664 L665 225.0 L666 222.5 H691 L692.5 220.5 H696.5 L698 222.5 H709 L710 225.0 L711 222.5 H720 L721 225.0 L722 222.5 H729 L730.5 220.5 H731.5 L733 222.5 H736 L737.5 224.5 H738.5 L740 222.5 H747 L748 225.0 L749 222.5 H752 L753.5 220.5 H762.5 L764 222.5 H765 L766.5 224.5 H769.5 L771 222.5 H772 L773 225.0 L774 222.5 H777" fill="none" stroke="#f0f000" stroke-width="1.1"/><path d="M308.5 218.5H322.5L326 223.5L322.5 228.5H308.5Z" fill="none" stroke="#f0f000"/><path d="M314.5 220V227.5M313 221h1.5" stroke="#f0f000" fill="none"/><path d="M317.5 219V228" stroke="#f0f000"/><path d="M308.5 368.5H322L326 373.5L322 378.5H308.5Z" fill="none" stroke="#12e2ea"/><path d="M313 370.5H317.5V372.5L313.5 377.5H318" fill="none" stroke="#12e2ea"/><path d="M548.5 152.5H556.5L552.5 156.5Z" fill="none" stroke="#ff8a10"/><path d="M548.5 156.5H556.5V166L552.5 170L548.5 166Z" fill="none" stroke="#ff8a10"/><path d="M550 159.5H555M552.5 159.5V167" stroke="#ff8a10"/></svg><!--/SCOPE-->
<div class="a" style="left:327px;top:134.5px;font-size:12.5px;font-weight:bold;letter-spacing:-0.1px;color:#ff8a10">RIGOL</div>
<div class="a" style="left:328px;top:455px;font-size:12px;font-weight:bold;color:#f0f000">CH1 5.00mV</div>
<div class="a" style="left:441px;top:455px;font-size:12px;font-weight:bold;color:#12e2ea">CH2 5.00mV</div>
<div class="a" style="left:553px;top:455px;font-size:12px;font-weight:bold;color:#fff">20.00ns</div>
<div class="a" style="left:627px;top:456px;font-size:11.5px;letter-spacing:-0.45px;color:#ff8a10">Delay:0.000s</div>

<svg style="left:0;top:0" width="877" height="622"><g stroke="#a0a0a0" stroke-width="1.2"><path d="M856 613L868 601M860 613L868 605M864 613L868 609"/></g><g stroke="#fff" stroke-width="1"><path d="M857 613L868 602M861 613L868 606M865 613L868 610"/></g></svg>
<!-- status -->
<div id="status" class="a">
  <div class="sp" style="left:0;width:648px;font-size:11.5px;letter-spacing:-0.3px">Status</div>
  <div class="sp" style="left:650px;width:95px">8/11/2013</div>
  <div class="sp" style="left:747px;width:95px">6:16 PM</div>
</div>
</body></html>
